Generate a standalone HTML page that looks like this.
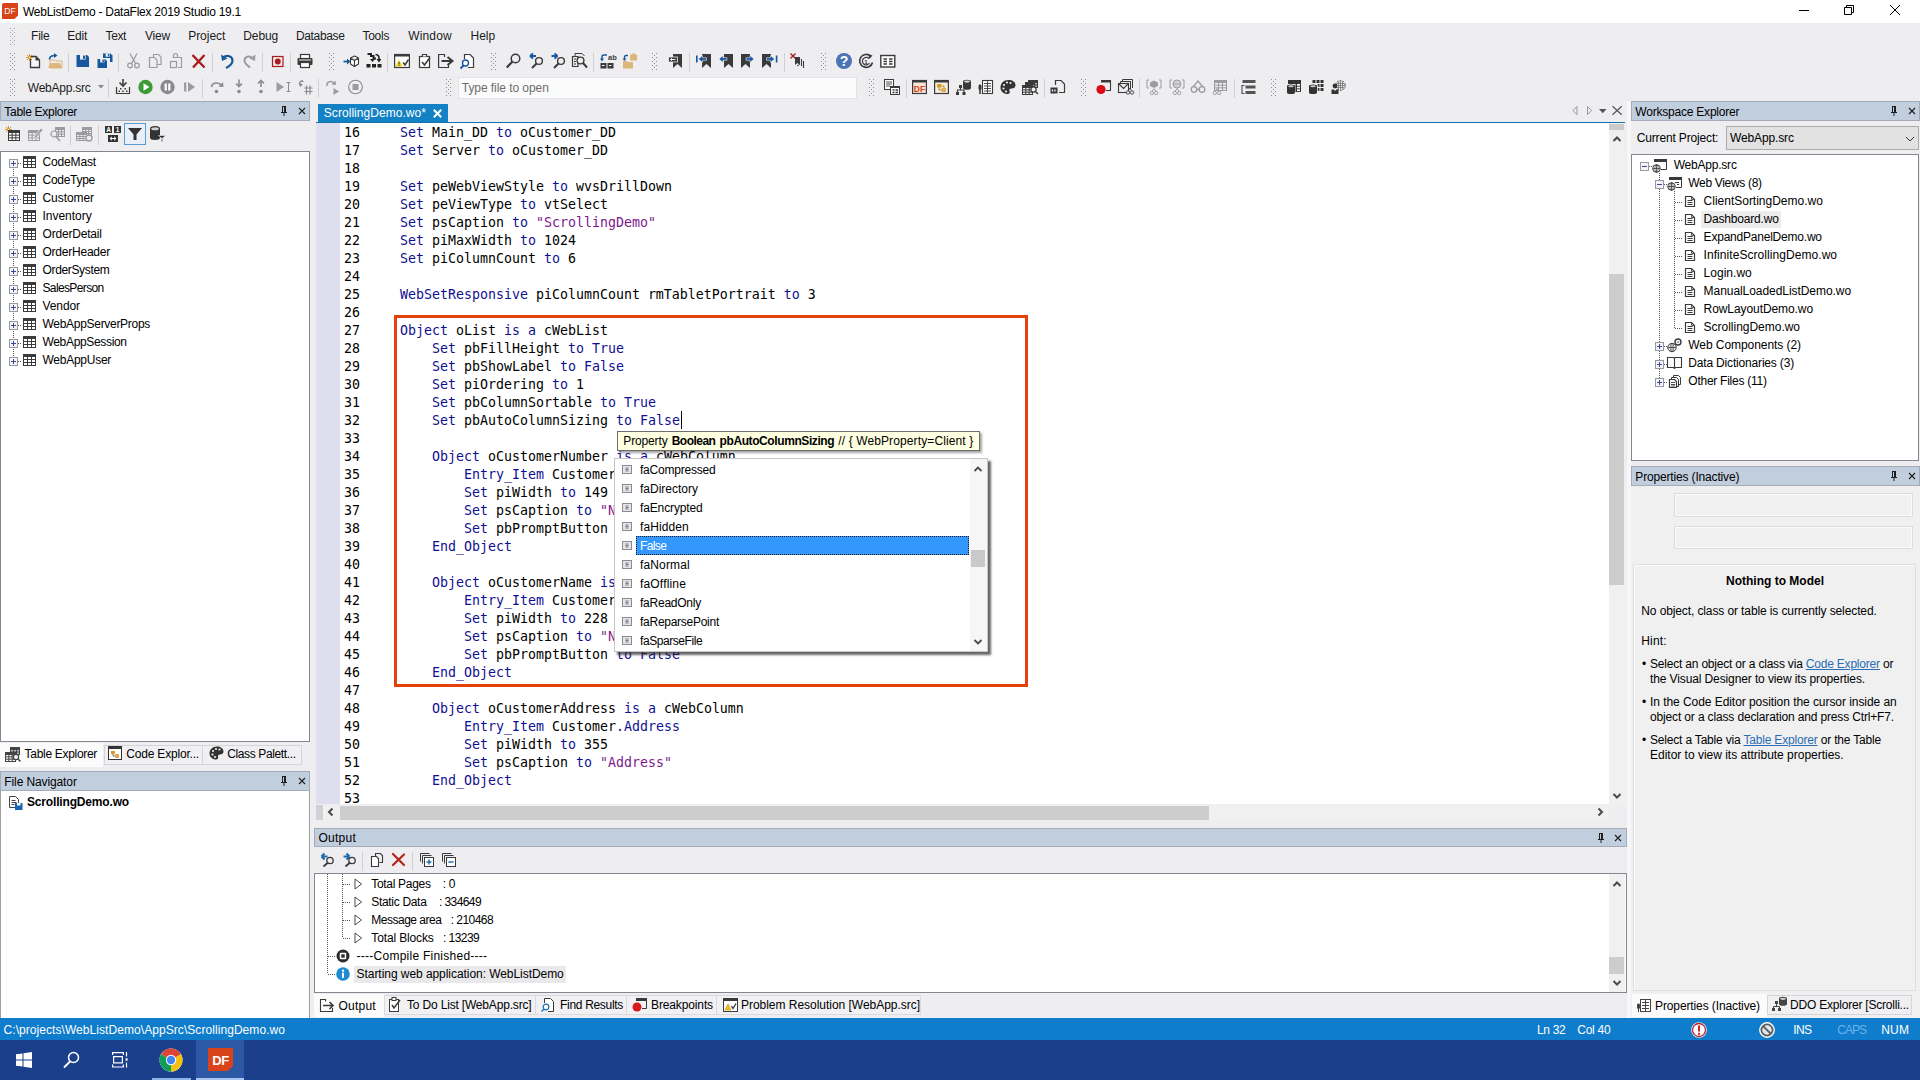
<!DOCTYPE html>
<html><head><meta charset="utf-8"><title>WebListDemo - DataFlex 2019 Studio 19.1</title>
<style>
html,body{margin:0;padding:0}
body{width:1920px;height:1080px;overflow:hidden;position:relative;background:#eeeef1;font-family:"Liberation Sans",sans-serif;font-size:12px;color:#000}
.a{position:absolute}
.t{white-space:pre}
.m{font-family:"DejaVu Sans Mono","Liberation Mono",monospace}
.k{color:#101092}
.s{color:#7d1a8c}
svg{position:absolute;overflow:visible}
</style></head><body>

<div class="a" style="left:0px;top:0px;width:1920px;height:23px;background:#fff;"></div>
<div class="a t" style="left:23px;top:3.5px;height:16px;line-height:16px;letter-spacing:-0.254px;">WebListDemo - DataFlex 2019 Studio 19.1</div>
<svg style="left:2px;top:2.7px;" width="16" height="16" viewBox="0 0 16 16"><path d="M2 0H16V12.500L12.500 16H0V2Q0 0 2 0Z" fill="#d8431a"/><text x="8" y="11" font-size="8.500" fill="#fff" text-anchor="middle" font-family="Liberation Sans,sans-serif">DF</text></svg>
<svg style="left:1798px;top:0px;" width="110" height="23" viewBox="0 0 110 23"><path d="M1 10.5H11" stroke="#000" stroke-width="1" fill="none"/><path d="M46.5 7.500H53.500V14.500H46.500Z M48.500 7.500V5.500H55.500V12.500H53.500" stroke="#000" stroke-width="1" fill="none"/><path d="M92 5L102 15M102 5L92 15" stroke="#000" stroke-width="1" fill="none"/></svg>
<div class="a t" style="left:31.1px;top:28px;height:16px;line-height:16px;color:#1b1b1b;letter-spacing:-0.284px;">File</div>
<div class="a t" style="left:67.2px;top:28px;height:16px;line-height:16px;color:#1b1b1b;letter-spacing:-0.17px;">Edit</div>
<div class="a t" style="left:105.6px;top:28px;height:16px;line-height:16px;color:#1b1b1b;letter-spacing:-0.402px;">Text</div>
<div class="a t" style="left:144.9px;top:28px;height:16px;line-height:16px;color:#1b1b1b;letter-spacing:-0.174px;">View</div>
<div class="a t" style="left:188.2px;top:28px;height:16px;line-height:16px;color:#1b1b1b;letter-spacing:-0.036px;">Project</div>
<div class="a t" style="left:243.2px;top:28px;height:16px;line-height:16px;color:#1b1b1b;letter-spacing:-0.072px;">Debug</div>
<div class="a t" style="left:296px;top:28px;height:16px;line-height:16px;color:#1b1b1b;letter-spacing:-0.359px;">Database</div>
<div class="a t" style="left:362.4px;top:28px;height:16px;line-height:16px;color:#1b1b1b;letter-spacing:-0.243px;">Tools</div>
<div class="a t" style="left:408.2px;top:28px;height:16px;line-height:16px;color:#1b1b1b;letter-spacing:0.153px;">Window</div>
<div class="a t" style="left:470.5px;top:28px;height:16px;line-height:16px;color:#1b1b1b;letter-spacing:-0.02px;">Help</div>
<svg style="left:10px;top:28px;" width="5" height="17" viewBox="0 0 5 17"><g fill="#a4a4aa"><rect x="0" y="0" width="1" height="1"/><rect x="4" y="0" width="1" height="1"/><rect x="2" y="2" width="1" height="1"/><rect x="0" y="4" width="1" height="1"/><rect x="4" y="4" width="1" height="1"/><rect x="2" y="6" width="1" height="1"/><rect x="0" y="8" width="1" height="1"/><rect x="4" y="8" width="1" height="1"/><rect x="2" y="10" width="1" height="1"/><rect x="0" y="12" width="1" height="1"/><rect x="4" y="12" width="1" height="1"/><rect x="2" y="14" width="1" height="1"/><rect x="0" y="16" width="1" height="1"/><rect x="4" y="16" width="1" height="1"/></g></svg>
<svg style="left:10px;top:53px;" width="5" height="17" viewBox="0 0 5 17"><g fill="#8e8e94"><rect x="0" y="0" width="1" height="1"/><rect x="4" y="0" width="1" height="1"/><rect x="2" y="2" width="1" height="1"/><rect x="0" y="4" width="1" height="1"/><rect x="4" y="4" width="1" height="1"/><rect x="2" y="6" width="1" height="1"/><rect x="0" y="8" width="1" height="1"/><rect x="4" y="8" width="1" height="1"/><rect x="2" y="10" width="1" height="1"/><rect x="0" y="12" width="1" height="1"/><rect x="4" y="12" width="1" height="1"/><rect x="2" y="14" width="1" height="1"/><rect x="0" y="16" width="1" height="1"/><rect x="4" y="16" width="1" height="1"/></g></svg>
<svg style="left:25px;top:53px;" width="16" height="16" viewBox="0 0 16 16"><path d="M5.500 3.500H11L14.500 7V14.500H5.500Z" fill="#f6f6fa" stroke="#3a3a3a" stroke-width="1.300"/><path d="M10.500 3.500L14.500 7.500H10.500Z" fill="#3a3a3a"/><g transform="translate(1,1)" stroke="#d08a1a" stroke-width="0.9" fill="none"><path d="M3.500 0V7M0 3.500H7M1 1L6 6M6 1L1 6"/><circle cx="3.500" cy="3.500" r="1.200" fill="#ffe9a8" stroke="#d08a1a" stroke-width="0.800"/></g></svg>
<svg style="left:47px;top:53px;" width="16" height="16" viewBox="0 0 16 16"><path d="M3 7H8L9 8H15V15H3Z" fill="none" stroke="#dcb67a" stroke-width="1"/><path d="M1 15L3.500 10H13L15 15Z" fill="#dcb67a"/><path d="M2.500 6.500C2.500 3.500 5 2.500 8 2.500" fill="none" stroke="#17579b" stroke-width="1.700"/><path d="M7 0L10.500 2.500L7 5Z" fill="#17579b"/></svg>
<div class="a" style="left:68px;top:52.5px;width:1px;height:19px;background:#d0d0d6;"></div>
<svg style="left:76px;top:53px;" width="16" height="16" viewBox="0 0 16 16"><path d="M0.5 2H11.0L13.0 4V14H0.5Z" fill="#17579b"/><rect x="4.0" y="2" width="5.625" height="4.5600000000000005" fill="#eeeef1"/><rect x="7.0" y="2.6" width="1.875" height="3.3600000000000003" fill="#17579b"/></svg>
<svg style="left:97px;top:53px;" width="16" height="16" viewBox="0 0 16 16"><path d="M6 0.5H13.5L15.5 2.5V9.0H6Z" fill="#17579b"/><rect x="8.66" y="0.5" width="4.275" height="3.23" fill="#eeeef1"/><rect x="10.940000000000001" y="1.1" width="1.425" height="2.3800000000000003" fill="#17579b"/><rect x="4" y="5" width="9" height="5.500" fill="#eeeef1"/><path d="M0.5 6H8.0L10.0 8V15H0.5Z" fill="#17579b"/><rect x="3.16" y="6" width="4.275" height="3.42" fill="#eeeef1"/><rect x="5.44" y="6.6" width="1.425" height="2.5200000000000005" fill="#17579b"/></svg>
<div class="a" style="left:118px;top:52.5px;width:1px;height:19px;background:#d0d0d6;"></div>
<svg style="left:126px;top:53px;" width="16" height="16" viewBox="0 0 16 16"><path d="M4 0.500L9.500 10.500M11 0.500L5.500 10.500" stroke="#9b9ba1" stroke-width="1.300" fill="none"/><circle cx="4" cy="12.500" r="2.300" fill="none" stroke="#9b9ba1" stroke-width="1.300"/><circle cx="11" cy="12.500" r="2.300" fill="none" stroke="#9b9ba1" stroke-width="1.300"/></svg>
<svg style="left:148px;top:53px;" width="16" height="16" viewBox="0 0 16 16"><path d="M5.500 4V1.500H10.500L13 4V11.500H9" fill="none" stroke="#9b9ba1" stroke-width="1.200"/><path d="M1.500 4.500H6.500L9 7V14.500H1.500Z" fill="#eeeef1" stroke="#9b9ba1" stroke-width="1.200"/></svg>
<svg style="left:169px;top:53px;" width="16" height="16" viewBox="0 0 16 16"><path d="M4.500 4V2.500A2 2 0 0 1 8.500 2.500V4M3.500 4.500H12.500V14.500H9" fill="none" stroke="#9b9ba1" stroke-width="1.200"/><rect x="1.500" y="8.500" width="6" height="6" fill="#eeeef1" stroke="#9b9ba1" stroke-width="1.200"/></svg>
<svg style="left:191px;top:53px;" width="16" height="16" viewBox="0 0 16 16"><path d="M1.500 2L13.500 14.500M13.500 2L2 14.500" stroke="#a61d1d" stroke-width="2.400" fill="none"/></svg>
<div class="a" style="left:212px;top:52.5px;width:1px;height:19px;background:#d0d0d6;"></div>
<svg style="left:220px;top:53px;" width="16" height="16" viewBox="0 0 16 16"><path d="M3 4.500C7 1.500 12.500 3 12.500 7.500C12.500 11 9 13.500 6 15" fill="none" stroke="#17579b" stroke-width="2.200"/><path d="M1 1.500L2 8L7.500 5.500Z" fill="#17579b"/></svg>
<svg style="left:242px;top:53px;" width="16" height="16" viewBox="0 0 16 16"><path d="M10.500 5C7.500 2.500 2.500 3.500 2.500 7.500C2.500 10.500 5.500 12.500 8 14.500" fill="none" stroke="#9b9ba1" stroke-width="2"/><path d="M13.500 1.500L13 8L7.500 5.500Z" fill="#9b9ba1"/></svg>
<div class="a" style="left:262px;top:52.5px;width:1px;height:19px;background:#d0d0d6;"></div>
<svg style="left:271px;top:53px;" width="16" height="16" viewBox="0 0 16 16"><rect x="1.500" y="3.500" width="10.500" height="10" fill="#f5e6e6" stroke="#a61d1d" stroke-width="1.200"/><circle cx="6.800" cy="8.500" r="2.900" fill="#a61d1d"/></svg>
<div class="a" style="left:290px;top:52.5px;width:1px;height:19px;background:#d0d0d6;"></div>
<svg style="left:297px;top:53px;" width="16" height="16" viewBox="0 0 16 16"><rect x="3.500" y="1.500" width="9" height="4" fill="#fff" stroke="#3a3a3a" stroke-width="1.200"/><rect x="0.500" y="5" width="15" height="7" rx="1" fill="#3a3a3a"/><rect x="3.500" y="9.500" width="9" height="5" fill="#fff" stroke="#3a3a3a" stroke-width="1.200"/><rect x="2" y="6.500" width="12" height="1" fill="#eee"/></svg>
<svg style="left:329px;top:53px;" width="5" height="17" viewBox="0 0 5 17"><g fill="#8e8e94"><rect x="0" y="0" width="1" height="1"/><rect x="4" y="0" width="1" height="1"/><rect x="2" y="2" width="1" height="1"/><rect x="0" y="4" width="1" height="1"/><rect x="4" y="4" width="1" height="1"/><rect x="2" y="6" width="1" height="1"/><rect x="0" y="8" width="1" height="1"/><rect x="4" y="8" width="1" height="1"/><rect x="2" y="10" width="1" height="1"/><rect x="0" y="12" width="1" height="1"/><rect x="4" y="12" width="1" height="1"/><rect x="2" y="14" width="1" height="1"/><rect x="0" y="16" width="1" height="1"/><rect x="4" y="16" width="1" height="1"/></g></svg>
<svg style="left:343px;top:53px;" width="16" height="16" viewBox="0 0 16 16"><path d="M0.500 8.500H6" stroke="#17579b" stroke-width="1.800"/><path d="M4 5.500L7.500 8.500L4 11.500Z" fill="#17579b"/><path d="M11.500 3L15.500 5V11L11.500 13.500L7.500 11V5ZM7.500 5L11.500 7.500L15.500 5M11.500 7.500V13.500" fill="#fff" stroke="#3a3a3a" stroke-width="1.100" stroke-linejoin="round"/></svg>
<svg style="left:366px;top:53px;" width="16" height="16" viewBox="0 0 16 16"><path d="M1.500 1H5V3H7.500V5.500H10" fill="none" stroke="#222" stroke-width="2"/><path d="M9.500 1.500C12 1.500 13.500 3 13 6.500" fill="none" stroke="#222" stroke-width="1.600"/><path d="M10.500 6L13 9.500L15.500 6Z" fill="#222"/><path d="M4 6L6.500 9L9 6Z" fill="#222"/><rect x="0.500" y="11" width="4" height="3.500" fill="#222"/><rect x="6" y="11" width="4" height="3.500" fill="#222"/><rect x="11.500" y="11" width="4" height="3.500" fill="#222"/></svg>
<div class="a" style="left:387px;top:52.5px;width:1px;height:19px;background:#d0d0d6;"></div>
<svg style="left:394px;top:53px;" width="16" height="16" viewBox="0 0 16 16"><rect x="0.600" y="1.500" width="14.800" height="13" fill="#fff" stroke="#3a3a3a" stroke-width="1.200"/><rect x="0" y="1" width="16" height="2.500" fill="#3a3a3a"/><path d="M1.500 13.500L5 6.500L8.500 13.500Z" fill="#f2d21a"/><rect x="4.600" y="9" width="0.900" height="2.500" fill="#333"/><rect x="4.600" y="12" width="0.900" height="0.900" fill="#333"/><path d="M9 9.500L11 12L14.500 6.500" fill="none" stroke="#3a3a3a" stroke-width="1.500"/></svg>
<svg style="left:418px;top:53px;" width="16" height="16" viewBox="0 0 16 16"><rect x="1.500" y="3.500" width="10" height="11" fill="#fff" stroke="#3a3a3a" stroke-width="1.200"/><path d="M4.500 3.500V1.500H8.500V3.500" fill="#fff" stroke="#3a3a3a" stroke-width="1.200"/><path d="M4 9L6.500 12L12 4.500" fill="none" stroke="#3a3a3a" stroke-width="1.600"/></svg>
<svg style="left:438px;top:53px;" width="16" height="16" viewBox="0 0 16 16"><path d="M6.500 4V1.500H0.600V14.500H10.500V12" fill="none" stroke="#3a3a3a" stroke-width="1.200"/><path d="M3.500 8H13" stroke="#3a3a3a" stroke-width="2"/><path d="M9.500 4L14.500 8L9.500 12" fill="none" stroke="#3a3a3a" stroke-width="2"/></svg>
<svg style="left:460px;top:53px;" width="16" height="16" viewBox="0 0 16 16"><path d="M4.500 6V1.500H10L13.500 5V14.500H8" fill="#fff" stroke="#3a3a3a" stroke-width="1.200"/><circle cx="5.500" cy="10" r="3" fill="#fff" stroke="#17579b" stroke-width="1.400"/><path d="M3.500 12.500L0.500 15.500" stroke="#17579b" stroke-width="1.800"/></svg>
<svg style="left:491px;top:53px;" width="5" height="17" viewBox="0 0 5 17"><g fill="#8e8e94"><rect x="0" y="0" width="1" height="1"/><rect x="4" y="0" width="1" height="1"/><rect x="2" y="2" width="1" height="1"/><rect x="0" y="4" width="1" height="1"/><rect x="4" y="4" width="1" height="1"/><rect x="2" y="6" width="1" height="1"/><rect x="0" y="8" width="1" height="1"/><rect x="4" y="8" width="1" height="1"/><rect x="2" y="10" width="1" height="1"/><rect x="0" y="12" width="1" height="1"/><rect x="4" y="12" width="1" height="1"/><rect x="2" y="14" width="1" height="1"/><rect x="0" y="16" width="1" height="1"/><rect x="4" y="16" width="1" height="1"/></g></svg>
<svg style="left:506px;top:53px;" width="16" height="16" viewBox="0 0 16 16"><circle cx="9.500" cy="5.500" r="4.300" fill="none" stroke="#3a3a3a" stroke-width="1.500"/><path d="M6.500 8.500L0.800 14.500" stroke="#3a3a3a" stroke-width="2.200"/></svg>
<svg style="left:529px;top:53px;" width="16" height="16" viewBox="0 0 16 16"><path d="M1 3H7M1 3L4 0.300M1 3L4 5.700" stroke="#17579b" stroke-width="1.800" fill="none"/><circle cx="10" cy="8" r="3.400" fill="none" stroke="#3a3a3a" stroke-width="1.400"/><path d="M7.500 10.500L3 15" stroke="#3a3a3a" stroke-width="2"/></svg>
<svg style="left:551px;top:53px;" width="16" height="16" viewBox="0 0 16 16"><path d="M0.500 3H6.500M6.500 3L3.500 0.300M6.500 3L3.500 5.700" stroke="#17579b" stroke-width="1.800" fill="none"/><circle cx="10" cy="8" r="3.400" fill="none" stroke="#3a3a3a" stroke-width="1.400"/><path d="M7.500 10.500L3 15" stroke="#3a3a3a" stroke-width="2"/></svg>
<svg style="left:572px;top:53px;" width="16" height="16" viewBox="0 0 16 16"><path d="M3 3V0.500H10L12.500 3" fill="none" stroke="#3a3a3a" stroke-width="1"/><path d="M0.500 3.500H6V13.500H0.500Z" fill="none" stroke="#3a3a3a" stroke-width="1.200"/><path d="M2 6H4M2 8.500H4M2 11H4" stroke="#3a3a3a" stroke-width="1"/><circle cx="8.500" cy="7.500" r="3.400" fill="#eeeef1" stroke="#3a3a3a" stroke-width="1.400"/><path d="M11 10L15 14.500" stroke="#3a3a3a" stroke-width="2"/></svg>
<div class="a" style="left:593px;top:52.5px;width:1px;height:19px;background:#d0d0d6;"></div>
<svg style="left:600px;top:53px;" width="16" height="16" viewBox="0 0 16 16"><path d="M2 7V3.500Q2 2 4 2H7" fill="none" stroke="#17579b" stroke-width="1.400"/><path d="M0 5.500L2 8.500L4 5.500Z" fill="#17579b"/><text x="8" y="6.500" font-size="7.500" font-weight="bold" fill="#3a3a3a" font-family="Liberation Sans,sans-serif">ab</text><rect x="0.500" y="10" width="6" height="5.500" fill="#3a3a3a"/><rect x="7.500" y="10" width="6" height="5.500" fill="#3a3a3a"/><path d="M2 12.500H4.500M9 12.500H11.500" stroke="#fff" stroke-width="1"/></svg>
<svg style="left:622px;top:53px;" width="16" height="16" viewBox="0 0 16 16"><rect x="8" y="1.500" width="7" height="6" fill="#dcb67a"/><rect x="10" y="0.500" width="3" height="1.500" fill="#dcb67a"/><path d="M1 8H5L6 9H11V15.500H1Z" fill="#dcb67a"/><path d="M2.500 7V4Q2.500 2.500 4 2.500H6" fill="none" stroke="#17579b" stroke-width="1.300"/><path d="M0.500 5.500L2.500 8L4.500 5.500Z" fill="#17579b"/></svg>
<svg style="left:652px;top:53px;" width="5" height="17" viewBox="0 0 5 17"><g fill="#8e8e94"><rect x="0" y="0" width="1" height="1"/><rect x="4" y="0" width="1" height="1"/><rect x="2" y="2" width="1" height="1"/><rect x="0" y="4" width="1" height="1"/><rect x="4" y="4" width="1" height="1"/><rect x="2" y="6" width="1" height="1"/><rect x="0" y="8" width="1" height="1"/><rect x="4" y="8" width="1" height="1"/><rect x="2" y="10" width="1" height="1"/><rect x="0" y="12" width="1" height="1"/><rect x="4" y="12" width="1" height="1"/><rect x="2" y="14" width="1" height="1"/><rect x="0" y="16" width="1" height="1"/><rect x="4" y="16" width="1" height="1"/></g></svg>
<svg style="left:668px;top:53px;" width="16" height="16" viewBox="0 0 16 16"><path d="M5 1H14V15L9.5 11L5 15Z" fill="#3a3a3a"/><rect x="0.500" y="4" width="9" height="5" fill="#3a3a3a" stroke="#eeeef1" stroke-width="0.800"/><path d="M2.500 6.500H7.500M2.500 6.500L4 5.200M2.500 6.500L4 7.800" stroke="#fff" stroke-width="0.900" fill="none"/></svg>
<div class="a" style="left:689px;top:52.5px;width:1px;height:19px;background:#d0d0d6;"></div>
<svg style="left:696px;top:53px;" width="16" height="16" viewBox="0 0 16 16"><path d="M6 1H15V15L10.5 11L6 15Z" fill="#3a3a3a"/><path d="M2.5 6L6.5 2.5V4.7H10.5V7.3H6.5V9.5Z" fill="#17579b" stroke="#eeeef1" stroke-width="0.600"/><rect x="0" y="2.500" width="1.600" height="7" fill="#17579b"/></svg>
<svg style="left:719px;top:53px;" width="16" height="16" viewBox="0 0 16 16"><path d="M5 1H14V15L9.5 11L5 15Z" fill="#3a3a3a"/><path d="M0 6L4 2.5V4.7H8V7.3H4V9.5Z" fill="#17579b" stroke="#eeeef1" stroke-width="0.600"/></svg>
<svg style="left:741px;top:53px;" width="16" height="16" viewBox="0 0 16 16"><path d="M0 1H9V15L4.5 11L0 15Z" fill="#3a3a3a"/><path d="M13 6L9 2.5V4.7H5V7.3H9V9.5Z" fill="#17579b" stroke="#eeeef1" stroke-width="0.600"/></svg>
<svg style="left:762px;top:53px;" width="16" height="16" viewBox="0 0 16 16"><path d="M0 1H9V15L4.5 11L0 15Z" fill="#3a3a3a"/><path d="M12.5 6L8.5 2.5V4.7H4.5V7.3H8.5V9.5Z" fill="#17579b" stroke="#eeeef1" stroke-width="0.600"/><rect x="13.800" y="2.500" width="1.600" height="7" fill="#17579b"/></svg>
<div class="a" style="left:783.5px;top:52.5px;width:1px;height:19px;background:#d0d0d6;"></div>
<svg style="left:790px;top:53px;" width="16" height="16" viewBox="0 0 16 16"><path d="M0.500 0.500L5.500 5.500M5.500 0.500L0.500 5.500" stroke="#a61d1d" stroke-width="1.400"/><path d="M5 4H10V12L7.500 10L5 12Z" fill="#3a3a3a"/><path d="M11.500 6V13M13.500 8V15" stroke="#3a3a3a" stroke-width="1.100"/><path d="M7 13L9.500 11.500" stroke="#3a3a3a" stroke-width="1"/></svg>
<svg style="left:821px;top:53px;" width="5" height="17" viewBox="0 0 5 17"><g fill="#8e8e94"><rect x="0" y="0" width="1" height="1"/><rect x="4" y="0" width="1" height="1"/><rect x="2" y="2" width="1" height="1"/><rect x="0" y="4" width="1" height="1"/><rect x="4" y="4" width="1" height="1"/><rect x="2" y="6" width="1" height="1"/><rect x="0" y="8" width="1" height="1"/><rect x="4" y="8" width="1" height="1"/><rect x="2" y="10" width="1" height="1"/><rect x="0" y="12" width="1" height="1"/><rect x="4" y="12" width="1" height="1"/><rect x="2" y="14" width="1" height="1"/><rect x="0" y="16" width="1" height="1"/><rect x="4" y="16" width="1" height="1"/></g></svg>
<svg style="left:836px;top:53px;" width="16" height="16" viewBox="0 0 16 16"><circle cx="8" cy="8" r="8" fill="#4a74b5"/><text x="8" y="13" font-size="14" font-weight="bold" fill="#fff" text-anchor="middle" font-family="Liberation Sans,sans-serif">?</text></svg>
<svg style="left:858px;top:53px;" width="16" height="16" viewBox="0 0 16 16"><path d="M12.500 3A6.500 6.500 0 1 0 14.500 9.500" fill="none" stroke="#3a3a3a" stroke-width="1.600"/><path d="M11 5.500A3.800 3.800 0 1 0 11.500 10" fill="none" stroke="#3a3a3a" stroke-width="1.200"/><path d="M10 1L14.500 2.500L11.500 6Z" fill="#3a3a3a"/><text x="8" y="10.500" font-size="6" font-weight="bold" fill="#3a3a3a" text-anchor="middle" font-family="Liberation Sans,sans-serif">1</text></svg>
<svg style="left:880px;top:53px;" width="16" height="16" viewBox="0 0 16 16"><rect x="0.800" y="2.500" width="14" height="11.500" fill="#fff" stroke="#3a3a3a" stroke-width="1.400"/><path d="M3.500 6H7M9 6H12.500M3.500 8.500H7M9 8.500H12.500M3.500 11H7M9 11H12.500" stroke="#3a3a3a" stroke-width="1.500"/></svg>
<svg style="left:10px;top:79px;" width="5" height="17" viewBox="0 0 5 17"><g fill="#8e8e94"><rect x="0" y="0" width="1" height="1"/><rect x="4" y="0" width="1" height="1"/><rect x="2" y="2" width="1" height="1"/><rect x="0" y="4" width="1" height="1"/><rect x="4" y="4" width="1" height="1"/><rect x="2" y="6" width="1" height="1"/><rect x="0" y="8" width="1" height="1"/><rect x="4" y="8" width="1" height="1"/><rect x="2" y="10" width="1" height="1"/><rect x="0" y="12" width="1" height="1"/><rect x="4" y="12" width="1" height="1"/><rect x="2" y="14" width="1" height="1"/><rect x="0" y="16" width="1" height="1"/><rect x="4" y="16" width="1" height="1"/></g></svg>
<div class="a t" style="left:27.8px;top:80px;height:16px;line-height:16px;color:#1b1b1b;letter-spacing:-0.234px;">WebApp.src</div>
<svg style="left:98px;top:84.5px;" width="6" height="4" viewBox="0 0 6 4"><path d="M0 0H6L3 3.500Z" fill="#8a8a8e"/></svg>
<div class="a" style="left:108px;top:78.5px;width:1px;height:19px;background:#d0d0d6;"></div>
<svg style="left:115px;top:78.8px;" width="16" height="16" viewBox="0 0 16 16"><path d="M1.500 8V14.500H14.500V8" fill="none" stroke="#3a3a3a" stroke-width="1.200"/><path d="M8 0V6" stroke="#3a3a3a" stroke-width="1.600"/><path d="M4.500 3.500L8 7L11.500 3.500" fill="none" stroke="#3a3a3a" stroke-width="1.600"/><rect x="5" y="9" width="1.500" height="1.500" fill="#3a3a3a"/><rect x="9.500" y="9" width="1.500" height="1.500" fill="#3a3a3a"/><rect x="3.500" y="11.500" width="1.500" height="1.500" fill="#3a3a3a"/><rect x="7.200" y="11.500" width="1.500" height="1.500" fill="#3a3a3a"/><rect x="11" y="11.500" width="1.500" height="1.500" fill="#3a3a3a"/></svg>
<svg style="left:137.5px;top:78.8px;" width="16" height="16" viewBox="0 0 16 16"><circle cx="7.500" cy="8" r="7.200" fill="#3d9b35"/><path d="M5.500 4.200L11.500 8L5.500 11.800Z" fill="#fff"/></svg>
<svg style="left:159.5px;top:78.8px;" width="16" height="16" viewBox="0 0 16 16"><circle cx="7.500" cy="8" r="7.200" fill="#8a8a8e"/><rect x="4.600" y="4.500" width="2.200" height="7" fill="#fff"/><rect x="8.200" y="4.500" width="2.200" height="7" fill="#fff"/></svg>
<svg style="left:182px;top:78.8px;" width="16" height="16" viewBox="0 0 16 16"><rect x="2" y="3.500" width="2.300" height="9" fill="#9b9ba1"/><path d="M6 3L13 8L6 13Z" fill="#9b9ba1"/></svg>
<div class="a" style="left:202px;top:78.5px;width:1px;height:19px;background:#d0d0d6;"></div>
<svg style="left:210px;top:78.8px;" width="16" height="16" viewBox="0 0 16 16"><path d="M1.500 8C2 3.500 9 2.500 11.500 6.500" fill="none" stroke="#8a8a8e" stroke-width="1.600"/><path d="M8.500 7.500L13.500 8L13 3Z" fill="#8a8a8e"/><circle cx="6.500" cy="12.500" r="1.800" fill="#8a8a8e"/></svg>
<svg style="left:231px;top:78.8px;" width="16" height="16" viewBox="0 0 16 16"><path d="M8 0.500V7" stroke="#8a8a8e" stroke-width="1.600"/><path d="M5 4.500L8 7.500L11 4.500" fill="none" stroke="#8a8a8e" stroke-width="1.600"/><circle cx="8" cy="12.500" r="1.800" fill="#8a8a8e"/></svg>
<svg style="left:253px;top:78.8px;" width="16" height="16" viewBox="0 0 16 16"><path d="M8 8V1.500" stroke="#8a8a8e" stroke-width="1.600"/><path d="M5 4.500L8 1.500L11 4.500" fill="none" stroke="#8a8a8e" stroke-width="1.600"/><circle cx="8" cy="12.500" r="1.800" fill="#8a8a8e"/></svg>
<svg style="left:276px;top:78.8px;" width="16" height="16" viewBox="0 0 16 16"><path d="M0.500 3L8 8L0.500 13Z" fill="#9b9ba1"/><path d="M10.500 3.500H14.500M12.500 3.500V12.500M10.500 12.500H14.500" stroke="#8a8a8e" stroke-width="1" fill="none"/></svg>
<svg style="left:298px;top:78.8px;" width="16" height="16" viewBox="0 0 16 16"><path d="M2 6C0.500 3.500 3 1 5.500 2.500" fill="none" stroke="#8a8a8e" stroke-width="1.400"/><path d="M0.500 4.500L2.500 8L5 5Z" fill="#8a8a8e"/><path d="M8.500 6.500V15.500M12 6.500V15.500M6.500 9H14.500M6.500 12.500H14.500" stroke="#8a8a8e" stroke-width="1.200"/></svg>
<div class="a" style="left:318px;top:78.5px;width:1px;height:19px;background:#d0d0d6;"></div>
<svg style="left:325px;top:78.8px;" width="16" height="16" viewBox="0 0 16 16"><path d="M2 7C1 3 6 1 9 4" fill="none" stroke="#9b9ba1" stroke-width="1.500"/><path d="M6.500 5.500L11 6L10.500 1.500Z" fill="#9b9ba1"/><path d="M8.500 9L14 12.500L8.500 16Z" fill="#9b9ba1"/></svg>
<svg style="left:347.5px;top:78.8px;" width="16" height="16" viewBox="0 0 16 16"><circle cx="7.500" cy="8" r="6.800" fill="none" stroke="#8a8a8e" stroke-width="1.100"/><rect x="4.500" y="5" width="6" height="6" fill="#9b9ba1"/></svg>
<svg style="left:446px;top:79px;" width="5" height="17" viewBox="0 0 5 17"><g fill="#8e8e94"><rect x="0" y="0" width="1" height="1"/><rect x="4" y="0" width="1" height="1"/><rect x="2" y="2" width="1" height="1"/><rect x="0" y="4" width="1" height="1"/><rect x="4" y="4" width="1" height="1"/><rect x="2" y="6" width="1" height="1"/><rect x="0" y="8" width="1" height="1"/><rect x="4" y="8" width="1" height="1"/><rect x="2" y="10" width="1" height="1"/><rect x="0" y="12" width="1" height="1"/><rect x="4" y="12" width="1" height="1"/><rect x="2" y="14" width="1" height="1"/><rect x="0" y="16" width="1" height="1"/><rect x="4" y="16" width="1" height="1"/></g></svg>
<div class="a" style="left:457.5px;top:76.5px;width:399px;height:22px;background:#fbfbfc;border:1px solid #e3e3e8;box-sizing:border-box;"></div>
<div class="a t" style="left:461.8px;top:80px;height:16px;line-height:16px;color:#6d6d6d;letter-spacing:-0.062px;">Type file to open</div>
<svg style="left:869px;top:79px;" width="5" height="17" viewBox="0 0 5 17"><g fill="#8e8e94"><rect x="0" y="0" width="1" height="1"/><rect x="4" y="0" width="1" height="1"/><rect x="2" y="2" width="1" height="1"/><rect x="0" y="4" width="1" height="1"/><rect x="4" y="4" width="1" height="1"/><rect x="2" y="6" width="1" height="1"/><rect x="0" y="8" width="1" height="1"/><rect x="4" y="8" width="1" height="1"/><rect x="2" y="10" width="1" height="1"/><rect x="0" y="12" width="1" height="1"/><rect x="4" y="12" width="1" height="1"/><rect x="2" y="14" width="1" height="1"/><rect x="0" y="16" width="1" height="1"/><rect x="4" y="16" width="1" height="1"/></g></svg>
<svg style="left:884px;top:78.8px;" width="16" height="16" viewBox="0 0 16 16"><rect x="0.500" y="0.500" width="9" height="10" fill="#fff" stroke="#3a3a3a" stroke-width="1"/><path d="M2 3H8M2 5H8M2 7H6" stroke="#3a3a3a" stroke-width="0.900"/><rect x="6.500" y="7.500" width="9" height="8" fill="#fff" stroke="#3a3a3a" stroke-width="1"/><rect x="6" y="7" width="10" height="2" fill="#3a3a3a"/><path d="M8.500 11H10.500M11.500 11H14M8.500 13.500H10.500M11.500 13.500H14" stroke="#3a3a3a" stroke-width="1.300"/></svg>
<div class="a" style="left:906px;top:78.5px;width:1px;height:19px;background:#d0d0d6;"></div>
<svg style="left:912px;top:78.8px;" width="16" height="16" viewBox="0 0 16 16"><rect x="0.600" y="1.500" width="13.800" height="13" fill="#fbe3d8" stroke="#3a3a3a" stroke-width="1.200"/><rect x="0" y="1" width="15" height="2.500" fill="#3a3a3a"/><text x="7.500" y="12.500" font-size="8.500" font-weight="bold" fill="#d8431a" text-anchor="middle" font-family="Liberation Sans,sans-serif">DF</text></svg>
<svg style="left:934px;top:78.8px;" width="16" height="16" viewBox="0 0 16 16"><rect x="0.600" y="1.500" width="13.800" height="13" fill="#f6eee0" stroke="#3a3a3a" stroke-width="1.200"/><rect x="0" y="1" width="15" height="2.500" fill="#3a3a3a"/><rect x="3" y="5" width="4.500" height="3.500" fill="#d69a2d"/><rect x="7.500" y="9" width="4.500" height="4" fill="#e0ad55"/><path d="M5 8.500V11H7.500M10 9V7H8" stroke="#a87a22" fill="none" stroke-width="0.900"/></svg>
<svg style="left:956px;top:78.8px;" width="16" height="16" viewBox="0 0 16 16"><path d="M7 2.500A4 1.800 0 0 1 15 2.500V9A4 1.800 0 0 1 7 9Z" fill="#3a3a3a"/><ellipse cx="11" cy="2.600" rx="3" ry="1.100" fill="#d6d6d6"/><path d="M4.500 8V11M1.500 13.500V11H8V13.500" fill="none" stroke="#3a3a3a" stroke-width="1.100"/><rect x="3" y="6" width="3" height="3" fill="#3a3a3a"/><rect x="0" y="13" width="3" height="3" fill="#3a3a3a"/><rect x="6.500" y="13" width="3" height="3" fill="#3a3a3a"/></svg>
<svg style="left:978px;top:78.8px;" width="16" height="16" viewBox="0 0 16 16"><rect x="4.500" y="1.500" width="10" height="13" fill="#fff" stroke="#3a3a3a" stroke-width="1.100"/><path d="M6 4.500H13M6 7H13M6 9.500H13M6 12H13M9.500 2V14" stroke="#3a3a3a" stroke-width="0.900"/><path d="M0.500 7C0.500 5 3.500 5 3.500 7V10L2.800 11V15H1.200V11L0.500 10Z" fill="#3a3a3a"/></svg>
<svg style="left:1000px;top:78.8px;" width="16" height="16" viewBox="0 0 16 16"><path d="M8.500 1C3.500 1 0.500 4.500 0.500 8.500C0.500 12.500 3.500 15 7.500 15C9.500 15 10.500 13.500 9.500 12C8.800 10.500 9.800 9.500 11.500 9.500C14 9.500 15.500 8.500 15.500 6C15.500 3 12.500 1 8.500 1Z" fill="#333"/><circle cx="4" cy="6" r="1.100" fill="#eee"/><circle cx="7" cy="3.500" r="1.100" fill="#eee"/><circle cx="10.500" cy="4" r="1.100" fill="#eee"/><circle cx="3.500" cy="9.500" r="1.100" fill="#eee"/><circle cx="6" cy="12.500" r="1.100" fill="#eee"/></svg>
<svg style="left:1022px;top:78.8px;" width="16" height="16" viewBox="0 0 16 16"><g transform="translate(6,1)"><rect x="0" y="0" width="10" height="8" fill="#3a3a3a"/><rect x="1.0" y="3.0" width="2.0" height="0.67" fill="#eeeef1"/><rect x="1.0" y="4.67" width="2.0" height="0.67" fill="#eeeef1"/><rect x="1.0" y="6.33" width="2.0" height="0.67" fill="#eeeef1"/><rect x="4.0" y="3.0" width="2.0" height="0.67" fill="#eeeef1"/><rect x="4.0" y="4.67" width="2.0" height="0.67" fill="#eeeef1"/><rect x="4.0" y="6.33" width="2.0" height="0.67" fill="#eeeef1"/><rect x="7.0" y="3.0" width="2.0" height="0.67" fill="#eeeef1"/><rect x="7.0" y="4.67" width="2.0" height="0.67" fill="#eeeef1"/><rect x="7.0" y="6.33" width="2.0" height="0.67" fill="#eeeef1"/></g><g transform="translate(3,3)"><rect x="0" y="0" width="10" height="8" fill="#3a3a3a"/><rect x="1.0" y="3.0" width="2.0" height="0.67" fill="#eeeef1"/><rect x="1.0" y="4.67" width="2.0" height="0.67" fill="#eeeef1"/><rect x="1.0" y="6.33" width="2.0" height="0.67" fill="#eeeef1"/><rect x="4.0" y="3.0" width="2.0" height="0.67" fill="#eeeef1"/><rect x="4.0" y="4.67" width="2.0" height="0.67" fill="#eeeef1"/><rect x="4.0" y="6.33" width="2.0" height="0.67" fill="#eeeef1"/><rect x="7.0" y="3.0" width="2.0" height="0.67" fill="#eeeef1"/><rect x="7.0" y="4.67" width="2.0" height="0.67" fill="#eeeef1"/><rect x="7.0" y="6.33" width="2.0" height="0.67" fill="#eeeef1"/></g><g transform="translate(0,6)"><rect x="0" y="0" width="11" height="10" fill="#3a3a3a"/><rect x="1.0" y="3.0" width="2.33" height="1.33" fill="#eeeef1"/><rect x="1.0" y="5.33" width="2.33" height="1.33" fill="#eeeef1"/><rect x="1.0" y="7.67" width="2.33" height="1.33" fill="#eeeef1"/><rect x="4.33" y="3.0" width="2.33" height="1.33" fill="#eeeef1"/><rect x="4.33" y="5.33" width="2.33" height="1.33" fill="#eeeef1"/><rect x="4.33" y="7.67" width="2.33" height="1.33" fill="#eeeef1"/><rect x="7.67" y="3.0" width="2.33" height="1.33" fill="#eeeef1"/><rect x="7.67" y="5.33" width="2.33" height="1.33" fill="#eeeef1"/><rect x="7.67" y="7.67" width="2.33" height="1.33" fill="#eeeef1"/></g><circle cx="11.500" cy="10.500" r="2.600" fill="#eeeef1" stroke="#3a3a3a" stroke-width="1.200"/><path d="M13.500 12.500L16 15" stroke="#3a3a3a" stroke-width="1.500"/></svg>
<div class="a" style="left:1044px;top:78.5px;width:1px;height:19px;background:#d0d0d6;"></div>
<svg style="left:1050px;top:78.8px;" width="16" height="16" viewBox="0 0 16 16"><path d="M5.500 6V1.500H11L14.500 5V13.500H9" fill="none" stroke="#3a3a3a" stroke-width="1.200"/><rect x="0.500" y="8.500" width="7" height="6" fill="#3a3a3a"/><path d="M2.500 10.500V12.500M5 10.500V12.500" stroke="#fff" stroke-width="1.200"/></svg>
<svg style="left:1081px;top:79px;" width="5" height="17" viewBox="0 0 5 17"><g fill="#8e8e94"><rect x="0" y="0" width="1" height="1"/><rect x="4" y="0" width="1" height="1"/><rect x="2" y="2" width="1" height="1"/><rect x="0" y="4" width="1" height="1"/><rect x="4" y="4" width="1" height="1"/><rect x="2" y="6" width="1" height="1"/><rect x="0" y="8" width="1" height="1"/><rect x="4" y="8" width="1" height="1"/><rect x="2" y="10" width="1" height="1"/><rect x="0" y="12" width="1" height="1"/><rect x="4" y="12" width="1" height="1"/><rect x="2" y="14" width="1" height="1"/><rect x="0" y="16" width="1" height="1"/><rect x="4" y="16" width="1" height="1"/></g></svg>
<svg style="left:1096px;top:78.8px;" width="16" height="16" viewBox="0 0 16 16"><path d="M5.500 1.500H14.500V11.500H10" fill="none" stroke="#3a3a3a" stroke-width="1.100"/><rect x="5" y="1" width="10" height="2.500" fill="#3a3a3a"/><circle cx="5" cy="10.500" r="4.600" fill="#d90b14"/></svg>
<svg style="left:1118px;top:78.8px;" width="16" height="16" viewBox="0 0 16 16"><path d="M4.500 3V0.500H14.500V9" fill="none" stroke="#3a3a3a" stroke-width="1"/><path d="M2.500 5V2.500H12.500V10" fill="none" stroke="#3a3a3a" stroke-width="1"/><rect x="0.500" y="4.500" width="10" height="9" fill="#eeeef1" stroke="#3a3a3a" stroke-width="1.100"/><path d="M0.500 4.500L5.500 9.500L10.500 4.500" fill="none" stroke="#3a3a3a" stroke-width="1.100"/><circle cx="10" cy="13.500" r="1.700" fill="#eeeef1" stroke="#3a3a3a" stroke-width="0.900"/><circle cx="14" cy="13.500" r="1.700" fill="#eeeef1" stroke="#3a3a3a" stroke-width="0.900"/><path d="M10.500 11.500L12 9L13.500 11.500" fill="none" stroke="#3a3a3a" stroke-width="0.900"/></svg>
<div class="a" style="left:1139px;top:78.5px;width:1px;height:19px;background:#d0d0d6;"></div>
<svg style="left:1146px;top:78.8px;" width="16" height="16" viewBox="0 0 16 16"><path d="M3 1H1V9H3M13 1H15V9H13" fill="none" stroke="#9b9ba1" stroke-width="1"/><path d="M4 3.500L8 1.500L12 3.500V7L8 9L4 7Z" fill="#9b9ba1"/><circle cx="5.8" cy="14" r="1.700" fill="none" stroke="#9b9ba1" stroke-width="0.900"/><circle cx="10.2" cy="14" r="1.700" fill="none" stroke="#9b9ba1" stroke-width="0.900"/><path d="M6 12.4L8 9.5L10 12.4" fill="none" stroke="#9b9ba1" stroke-width="0.900"/></svg>
<svg style="left:1169px;top:78.8px;" width="16" height="16" viewBox="0 0 16 16"><path d="M3 1H1V9H3M13 1H15V9H13" fill="none" stroke="#9b9ba1" stroke-width="1"/><circle cx="8" cy="5" r="4" fill="none" stroke="#9b9ba1" stroke-width="1"/><path d="M4 5H12M8 1V9M6 1.500V8.500M10 1.500V8.500" stroke="#9b9ba1" stroke-width="0.700"/><circle cx="5.8" cy="14" r="1.700" fill="none" stroke="#9b9ba1" stroke-width="0.900"/><circle cx="10.2" cy="14" r="1.700" fill="none" stroke="#9b9ba1" stroke-width="0.900"/><path d="M6 12.4L8 9.5L10 12.4" fill="none" stroke="#9b9ba1" stroke-width="0.900"/></svg>
<svg style="left:1190px;top:78.8px;" width="16" height="16" viewBox="0 0 16 16"><circle cx="4" cy="10.500" r="2.800" fill="none" stroke="#9b9ba1" stroke-width="1.300"/><circle cx="12" cy="10.500" r="2.800" fill="none" stroke="#9b9ba1" stroke-width="1.300"/><path d="M3 8L8 2L13 8M6.800 10.500H9.200" fill="none" stroke="#9b9ba1" stroke-width="1.300"/></svg>
<svg style="left:1212px;top:78.8px;" width="16" height="16" viewBox="0 0 16 16"><g transform="translate(2,1)"><rect x="0" y="0" width="13" height="11" fill="#9b9ba1"/><rect x="1.0" y="3.0" width="3.0" height="1.67" fill="#eeeef1"/><rect x="1.0" y="5.67" width="3.0" height="1.67" fill="#eeeef1"/><rect x="1.0" y="8.33" width="3.0" height="1.67" fill="#eeeef1"/><rect x="5.0" y="3.0" width="3.0" height="1.67" fill="#eeeef1"/><rect x="5.0" y="5.67" width="3.0" height="1.67" fill="#eeeef1"/><rect x="5.0" y="8.33" width="3.0" height="1.67" fill="#eeeef1"/><rect x="9.0" y="3.0" width="3.0" height="1.67" fill="#eeeef1"/><rect x="9.0" y="5.67" width="3.0" height="1.67" fill="#eeeef1"/><rect x="9.0" y="8.33" width="3.0" height="1.67" fill="#eeeef1"/></g><circle cx="2.8" cy="14" r="1.700" fill="none" stroke="#9b9ba1" stroke-width="0.900"/><circle cx="7.2" cy="14" r="1.700" fill="none" stroke="#9b9ba1" stroke-width="0.900"/><path d="M3 12.4L5 9.5L7 12.4" fill="none" stroke="#9b9ba1" stroke-width="0.900"/></svg>
<div class="a" style="left:1233.5px;top:78.5px;width:1px;height:19px;background:#d0d0d6;"></div>
<svg style="left:1241px;top:78.8px;" width="16" height="16" viewBox="0 0 16 16"><rect x="1.500" y="1" width="13" height="3" fill="#555"/><rect x="4.500" y="6.500" width="10" height="3" fill="#555"/><rect x="4.500" y="12" width="10" height="3" fill="#555"/><path d="M3.500 6.500H1V14.500H3.500" fill="none" stroke="#555" stroke-width="1.200"/></svg>
<svg style="left:1271px;top:79px;" width="5" height="17" viewBox="0 0 5 17"><g fill="#8e8e94"><rect x="0" y="0" width="1" height="1"/><rect x="4" y="0" width="1" height="1"/><rect x="2" y="2" width="1" height="1"/><rect x="0" y="4" width="1" height="1"/><rect x="4" y="4" width="1" height="1"/><rect x="2" y="6" width="1" height="1"/><rect x="0" y="8" width="1" height="1"/><rect x="4" y="8" width="1" height="1"/><rect x="2" y="10" width="1" height="1"/><rect x="0" y="12" width="1" height="1"/><rect x="4" y="12" width="1" height="1"/><rect x="2" y="14" width="1" height="1"/><rect x="0" y="16" width="1" height="1"/><rect x="4" y="16" width="1" height="1"/></g></svg>
<svg style="left:1286px;top:78.8px;" width="16" height="16" viewBox="0 0 16 16"><rect x="2" y="1" width="13" height="12" fill="#333"/><rect x="2" y="1" width="13" height="3" fill="#333"/><rect x="11" y="5.0" width="3" height="1.700" fill="#fff"/><rect x="11" y="7.7" width="3" height="1.700" fill="#fff"/><rect x="11" y="10.4" width="3" height="1.700" fill="#fff"/><rect x="0" y="5" width="9.500" height="11" fill="#eeeef1"/><path d="M1 7.02A4.0 1.52 0 0 1 9 7.02V13.48A4.0 1.52 0 0 1 1 13.48Z" fill="#333"/><ellipse cx="5.0" cy="7.319999999999999" rx="2.8" ry="0.9880000000000001" fill="#c9c9c9"/></svg>
<svg style="left:1308px;top:78.8px;" width="16" height="16" viewBox="0 0 16 16"><rect x="4.5" y="1" width="3" height="3" fill="#333"/><rect x="4.5" y="5" width="3" height="3" fill="#333"/><rect x="4.5" y="9" width="3" height="3" fill="#333"/><rect x="8.5" y="1" width="3" height="3" fill="#333"/><rect x="8.5" y="5" width="3" height="3" fill="#333"/><rect x="8.5" y="9" width="3" height="3" fill="#333"/><rect x="12.5" y="1" width="3" height="3" fill="#333"/><rect x="12.5" y="5" width="3" height="3" fill="#333"/><rect x="12.5" y="9" width="3" height="3" fill="#333"/><rect x="0" y="5" width="10.300" height="11" fill="#eeeef1"/><rect x="9.700" y="5" width="0.900" height="2.500" fill="#333"/><rect x="9.700" y="9" width="0.900" height="2.500" fill="#333"/><path d="M1 7.02A4.0 1.52 0 0 1 9 7.02V13.48A4.0 1.52 0 0 1 1 13.48Z" fill="#333"/><ellipse cx="5.0" cy="7.319999999999999" rx="2.8" ry="0.9880000000000001" fill="#c9c9c9"/></svg>
<svg style="left:1330px;top:78.8px;" width="16" height="16" viewBox="0 0 16 16"><circle cx="10.500" cy="6.500" r="4.800" fill="#eeeef1" stroke="#444" stroke-width="0.900" stroke-dasharray="2 1"/><path d="M6 6.500H15M10.500 2V11M8.500 2.500V10.500M12.500 2.500V10.500M6.500 4.500H14.500M6.500 8.500H14.500" stroke="#555" stroke-width="0.600"/><circle cx="5" cy="7" r="2.400" fill="#333"/><path d="M1.500 10.500H3.700L5 12L6.300 10.500H8.500V15H1.500Z" fill="#333"/></svg>
<div class="a" style="left:0px;top:101px;width:310px;height:20px;background:#c1cedd;border:1px solid #a3abb8;box-sizing:border-box;"></div>
<div class="a t" style="left:4.3px;top:103.6px;height:16px;line-height:16px;letter-spacing:-0.286px;">Table Explorer</div>
<svg style="left:281px;top:106px;" width="6" height="10" viewBox="0 0 6 10"><path d="M1.5 0.5H4.5M1.5 0V6M4.5 0V6M3.5 0V6M0 6.5H6M3 7V10" stroke="#1e1e1e" stroke-width="1" fill="none"/></svg>
<svg style="left:298.5px;top:108px;" width="6" height="6" viewBox="0 0 6 6"><path d="M0 0L6 6M6 0L0 6" stroke="#1e1e1e" stroke-width="1.1" fill="none"/></svg>
<svg style="left:5px;top:126px;" width="16" height="16" viewBox="0 0 16 16"><g transform="translate(0,0)" stroke="#d08a1a" stroke-width="0.9" fill="none"><path d="M3.500 0V7M0 3.500H7M1 1L6 6M6 1L1 6"/><circle cx="3.500" cy="3.500" r="1.200" fill="#ffe9a8" stroke="#d08a1a" stroke-width="0.800"/></g><g transform="translate(3,4)"><rect x="0" y="0" width="12" height="11" fill="#3a3a3a"/><rect x="1.0" y="3.0" width="2.67" height="1.67" fill="#fff"/><rect x="1.0" y="5.67" width="2.67" height="1.67" fill="#fff"/><rect x="1.0" y="8.33" width="2.67" height="1.67" fill="#fff"/><rect x="4.67" y="3.0" width="2.67" height="1.67" fill="#fff"/><rect x="4.67" y="5.67" width="2.67" height="1.67" fill="#fff"/><rect x="4.67" y="8.33" width="2.67" height="1.67" fill="#fff"/><rect x="8.33" y="3.0" width="2.67" height="1.67" fill="#fff"/><rect x="8.33" y="5.67" width="2.67" height="1.67" fill="#fff"/><rect x="8.33" y="8.33" width="2.67" height="1.67" fill="#fff"/></g></svg>
<svg style="left:28px;top:126px;" width="16" height="16" viewBox="0 0 16 16"><g transform="translate(0,4)"><rect x="0" y="0" width="12" height="11" fill="#9b9ba1"/><rect x="1.0" y="3.0" width="2.67" height="1.67" fill="#eeeef1"/><rect x="1.0" y="5.67" width="2.67" height="1.67" fill="#eeeef1"/><rect x="1.0" y="8.33" width="2.67" height="1.67" fill="#eeeef1"/><rect x="4.67" y="3.0" width="2.67" height="1.67" fill="#eeeef1"/><rect x="4.67" y="5.67" width="2.67" height="1.67" fill="#eeeef1"/><rect x="4.67" y="8.33" width="2.67" height="1.67" fill="#eeeef1"/><rect x="8.33" y="3.0" width="2.67" height="1.67" fill="#eeeef1"/><rect x="8.33" y="5.67" width="2.67" height="1.67" fill="#eeeef1"/><rect x="8.33" y="8.33" width="2.67" height="1.67" fill="#eeeef1"/></g><path d="M6 11L13 2L15 4L8 12L5.500 12.5Z" fill="#9b9ba1" stroke="#eeeef1" stroke-width="0.8"/></svg>
<svg style="left:50px;top:126px;" width="16" height="16" viewBox="0 0 16 16"><g transform="translate(5,1)"><rect x="0" y="0" width="10" height="10" fill="#9b9ba1"/><rect x="1.0" y="3.0" width="2.0" height="1.33" fill="#eeeef1"/><rect x="1.0" y="5.33" width="2.0" height="1.33" fill="#eeeef1"/><rect x="1.0" y="7.67" width="2.0" height="1.33" fill="#eeeef1"/><rect x="4.0" y="3.0" width="2.0" height="1.33" fill="#eeeef1"/><rect x="4.0" y="5.33" width="2.0" height="1.33" fill="#eeeef1"/><rect x="4.0" y="7.67" width="2.0" height="1.33" fill="#eeeef1"/><rect x="7.0" y="3.0" width="2.0" height="1.33" fill="#eeeef1"/><rect x="7.0" y="5.33" width="2.0" height="1.33" fill="#eeeef1"/><rect x="7.0" y="7.67" width="2.0" height="1.33" fill="#eeeef1"/></g><circle cx="4" cy="8" r="3" fill="#eeeef1" stroke="#9b9ba1" stroke-width="1.2"/><path d="M6 10.500L10 15" stroke="#9b9ba1" stroke-width="1.6"/></svg>
<div class="a" style="left:70px;top:125px;width:1px;height:20px;background:#cfcfd6;"></div>
<svg style="left:76px;top:126px;" width="17" height="16" viewBox="0 0 17 16"><g transform="translate(6,1)"><rect x="0" y="0" width="10" height="9" fill="#9b9ba1"/><rect x="1.0" y="3.0" width="2.0" height="1.0" fill="#eeeef1"/><rect x="1.0" y="5.0" width="2.0" height="1.0" fill="#eeeef1"/><rect x="1.0" y="7.0" width="2.0" height="1.0" fill="#eeeef1"/><rect x="4.0" y="3.0" width="2.0" height="1.0" fill="#eeeef1"/><rect x="4.0" y="5.0" width="2.0" height="1.0" fill="#eeeef1"/><rect x="4.0" y="7.0" width="2.0" height="1.0" fill="#eeeef1"/><rect x="7.0" y="3.0" width="2.0" height="1.0" fill="#eeeef1"/><rect x="7.0" y="5.0" width="2.0" height="1.0" fill="#eeeef1"/><rect x="7.0" y="7.0" width="2.0" height="1.0" fill="#eeeef1"/></g><g transform="translate(0,6)"><rect x="0" y="0" width="11" height="9" fill="#9b9ba1"/><rect x="1.0" y="3.0" width="2.33" height="1.0" fill="#eeeef1"/><rect x="1.0" y="5.0" width="2.33" height="1.0" fill="#eeeef1"/><rect x="1.0" y="7.0" width="2.33" height="1.0" fill="#eeeef1"/><rect x="4.33" y="3.0" width="2.33" height="1.0" fill="#eeeef1"/><rect x="4.33" y="5.0" width="2.33" height="1.0" fill="#eeeef1"/><rect x="4.33" y="7.0" width="2.33" height="1.0" fill="#eeeef1"/><rect x="7.67" y="3.0" width="2.33" height="1.0" fill="#eeeef1"/><rect x="7.67" y="5.0" width="2.33" height="1.0" fill="#eeeef1"/><rect x="7.67" y="7.0" width="2.33" height="1.0" fill="#eeeef1"/></g><circle cx="13" cy="12" r="3" fill="#eeeef1" stroke="#9b9ba1" stroke-width="1.3"/></svg>
<div class="a" style="left:98px;top:125px;width:1px;height:20px;background:#cfcfd6;"></div>
<svg style="left:105px;top:126px;" width="16" height="16" viewBox="0 0 16 16"><rect x="0" y="0" width="7" height="7" fill="#333"/><rect x="9" y="0" width="7" height="7" fill="#333"/><rect x="3" y="9" width="10" height="7" fill="#333"/><text x="3.5" y="6" font-size="6.5" font-weight="bold" fill="#fff" text-anchor="middle" font-family="Liberation Sans,sans-serif">A</text><text x="12.5" y="6" font-size="6.5" font-weight="bold" fill="#fff" text-anchor="middle" font-family="Liberation Sans,sans-serif">1</text><path d="M5 12.5H11M5 12.5L7 10.800M5 12.5L7 14.2M11 12.5L9 10.800M11 12.5L9 14.2" stroke="#fff" stroke-width="1" fill="none"/></svg>
<div class="a" style="left:124px;top:123px;width:22px;height:22px;background:#e9eff7;border:1px solid #5b9bd5;box-sizing:border-box;"></div>
<svg style="left:128px;top:127px;" width="14" height="14" viewBox="0 0 14 14"><path d="M0 1H14L8.500 7.5V13H5.500V7.5Z" fill="#333"/></svg>
<svg style="left:150px;top:126px;" width="16" height="16" viewBox="0 0 16 16"><path d="M0 2.500A5 2.500 0 0 1 10 2.500V11.500A5 2.500 0 0 1 0 11.500Z" fill="#333"/><ellipse cx="5" cy="2.800" rx="3.800" ry="1.500" fill="#cfcfcf"/><path d="M8.500 9.500H15.500L12 13Z M11.300 12H12.700V15.500H11.300Z" fill="#333" stroke="#eeeef2" stroke-width="0.6"/></svg>
<div class="a" style="left:0px;top:151px;width:310px;height:591px;background:#fff;border:1px solid #828790;box-sizing:border-box;"></div>
<div class="a" style="left:13px;top:163px;width:1px;height:198px;background:repeating-linear-gradient(to bottom,#555 0,#555 1px,transparent 1px,transparent 2px);"></div>
<div class="a" style="left:18px;top:163px;width:4px;height:1px;background:repeating-linear-gradient(to right,#555 0,#555 1px,transparent 1px,transparent 2px);"></div>
<svg style="left:9px;top:159px;" width="9" height="9" viewBox="0 0 9 9"><rect x="0.5" y="0.5" width="8" height="8" fill="#f4f4fa" stroke="#9898a4"/><path d="M2 4.5H7M4.5 2V7" stroke="#3b4a8c" stroke-width="1"/></svg>
<svg style="left:23px;top:156px;" width="13" height="12" viewBox="0 0 13 12"><g transform="translate(0,0)"><rect x="0" y="0" width="13" height="12" fill="#3a3a3a"/><rect x="1.0" y="3.0" width="3.0" height="2.0" fill="#fff"/><rect x="1.0" y="6.0" width="3.0" height="2.0" fill="#fff"/><rect x="1.0" y="9.0" width="3.0" height="2.0" fill="#fff"/><rect x="5.0" y="3.0" width="3.0" height="2.0" fill="#fff"/><rect x="5.0" y="6.0" width="3.0" height="2.0" fill="#fff"/><rect x="5.0" y="9.0" width="3.0" height="2.0" fill="#fff"/><rect x="9.0" y="3.0" width="3.0" height="2.0" fill="#fff"/><rect x="9.0" y="6.0" width="3.0" height="2.0" fill="#fff"/><rect x="9.0" y="9.0" width="3.0" height="2.0" fill="#fff"/></g></svg>
<div class="a t" style="left:42.5px;top:153.7px;height:16px;line-height:16px;letter-spacing:-0.149px;">CodeMast</div>
<div class="a" style="left:18px;top:181px;width:4px;height:1px;background:repeating-linear-gradient(to right,#555 0,#555 1px,transparent 1px,transparent 2px);"></div>
<svg style="left:9px;top:177px;" width="9" height="9" viewBox="0 0 9 9"><rect x="0.5" y="0.5" width="8" height="8" fill="#f4f4fa" stroke="#9898a4"/><path d="M2 4.5H7M4.5 2V7" stroke="#3b4a8c" stroke-width="1"/></svg>
<svg style="left:23px;top:174px;" width="13" height="12" viewBox="0 0 13 12"><g transform="translate(0,0)"><rect x="0" y="0" width="13" height="12" fill="#3a3a3a"/><rect x="1.0" y="3.0" width="3.0" height="2.0" fill="#fff"/><rect x="1.0" y="6.0" width="3.0" height="2.0" fill="#fff"/><rect x="1.0" y="9.0" width="3.0" height="2.0" fill="#fff"/><rect x="5.0" y="3.0" width="3.0" height="2.0" fill="#fff"/><rect x="5.0" y="6.0" width="3.0" height="2.0" fill="#fff"/><rect x="5.0" y="9.0" width="3.0" height="2.0" fill="#fff"/><rect x="9.0" y="3.0" width="3.0" height="2.0" fill="#fff"/><rect x="9.0" y="6.0" width="3.0" height="2.0" fill="#fff"/><rect x="9.0" y="9.0" width="3.0" height="2.0" fill="#fff"/></g></svg>
<div class="a t" style="left:42.5px;top:171.7px;height:16px;line-height:16px;letter-spacing:-0.276px;">CodeType</div>
<div class="a" style="left:18px;top:199px;width:4px;height:1px;background:repeating-linear-gradient(to right,#555 0,#555 1px,transparent 1px,transparent 2px);"></div>
<svg style="left:9px;top:195px;" width="9" height="9" viewBox="0 0 9 9"><rect x="0.5" y="0.5" width="8" height="8" fill="#f4f4fa" stroke="#9898a4"/><path d="M2 4.5H7M4.5 2V7" stroke="#3b4a8c" stroke-width="1"/></svg>
<svg style="left:23px;top:192px;" width="13" height="12" viewBox="0 0 13 12"><g transform="translate(0,0)"><rect x="0" y="0" width="13" height="12" fill="#3a3a3a"/><rect x="1.0" y="3.0" width="3.0" height="2.0" fill="#fff"/><rect x="1.0" y="6.0" width="3.0" height="2.0" fill="#fff"/><rect x="1.0" y="9.0" width="3.0" height="2.0" fill="#fff"/><rect x="5.0" y="3.0" width="3.0" height="2.0" fill="#fff"/><rect x="5.0" y="6.0" width="3.0" height="2.0" fill="#fff"/><rect x="5.0" y="9.0" width="3.0" height="2.0" fill="#fff"/><rect x="9.0" y="3.0" width="3.0" height="2.0" fill="#fff"/><rect x="9.0" y="6.0" width="3.0" height="2.0" fill="#fff"/><rect x="9.0" y="9.0" width="3.0" height="2.0" fill="#fff"/></g></svg>
<div class="a t" style="left:42.5px;top:189.7px;height:16px;line-height:16px;letter-spacing:-0.064px;">Customer</div>
<div class="a" style="left:18px;top:217px;width:4px;height:1px;background:repeating-linear-gradient(to right,#555 0,#555 1px,transparent 1px,transparent 2px);"></div>
<svg style="left:9px;top:213px;" width="9" height="9" viewBox="0 0 9 9"><rect x="0.5" y="0.5" width="8" height="8" fill="#f4f4fa" stroke="#9898a4"/><path d="M2 4.5H7M4.5 2V7" stroke="#3b4a8c" stroke-width="1"/></svg>
<svg style="left:23px;top:210px;" width="13" height="12" viewBox="0 0 13 12"><g transform="translate(0,0)"><rect x="0" y="0" width="13" height="12" fill="#3a3a3a"/><rect x="1.0" y="3.0" width="3.0" height="2.0" fill="#fff"/><rect x="1.0" y="6.0" width="3.0" height="2.0" fill="#fff"/><rect x="1.0" y="9.0" width="3.0" height="2.0" fill="#fff"/><rect x="5.0" y="3.0" width="3.0" height="2.0" fill="#fff"/><rect x="5.0" y="6.0" width="3.0" height="2.0" fill="#fff"/><rect x="5.0" y="9.0" width="3.0" height="2.0" fill="#fff"/><rect x="9.0" y="3.0" width="3.0" height="2.0" fill="#fff"/><rect x="9.0" y="6.0" width="3.0" height="2.0" fill="#fff"/><rect x="9.0" y="9.0" width="3.0" height="2.0" fill="#fff"/></g></svg>
<div class="a t" style="left:42.5px;top:207.7px;height:16px;line-height:16px;letter-spacing:-0.018px;">Inventory</div>
<div class="a" style="left:18px;top:235px;width:4px;height:1px;background:repeating-linear-gradient(to right,#555 0,#555 1px,transparent 1px,transparent 2px);"></div>
<svg style="left:9px;top:231px;" width="9" height="9" viewBox="0 0 9 9"><rect x="0.5" y="0.5" width="8" height="8" fill="#f4f4fa" stroke="#9898a4"/><path d="M2 4.5H7M4.5 2V7" stroke="#3b4a8c" stroke-width="1"/></svg>
<svg style="left:23px;top:228px;" width="13" height="12" viewBox="0 0 13 12"><g transform="translate(0,0)"><rect x="0" y="0" width="13" height="12" fill="#3a3a3a"/><rect x="1.0" y="3.0" width="3.0" height="2.0" fill="#fff"/><rect x="1.0" y="6.0" width="3.0" height="2.0" fill="#fff"/><rect x="1.0" y="9.0" width="3.0" height="2.0" fill="#fff"/><rect x="5.0" y="3.0" width="3.0" height="2.0" fill="#fff"/><rect x="5.0" y="6.0" width="3.0" height="2.0" fill="#fff"/><rect x="5.0" y="9.0" width="3.0" height="2.0" fill="#fff"/><rect x="9.0" y="3.0" width="3.0" height="2.0" fill="#fff"/><rect x="9.0" y="6.0" width="3.0" height="2.0" fill="#fff"/><rect x="9.0" y="9.0" width="3.0" height="2.0" fill="#fff"/></g></svg>
<div class="a t" style="left:42.5px;top:225.7px;height:16px;line-height:16px;letter-spacing:-0.196px;">OrderDetail</div>
<div class="a" style="left:18px;top:253px;width:4px;height:1px;background:repeating-linear-gradient(to right,#555 0,#555 1px,transparent 1px,transparent 2px);"></div>
<svg style="left:9px;top:249px;" width="9" height="9" viewBox="0 0 9 9"><rect x="0.5" y="0.5" width="8" height="8" fill="#f4f4fa" stroke="#9898a4"/><path d="M2 4.5H7M4.5 2V7" stroke="#3b4a8c" stroke-width="1"/></svg>
<svg style="left:23px;top:246px;" width="13" height="12" viewBox="0 0 13 12"><g transform="translate(0,0)"><rect x="0" y="0" width="13" height="12" fill="#3a3a3a"/><rect x="1.0" y="3.0" width="3.0" height="2.0" fill="#fff"/><rect x="1.0" y="6.0" width="3.0" height="2.0" fill="#fff"/><rect x="1.0" y="9.0" width="3.0" height="2.0" fill="#fff"/><rect x="5.0" y="3.0" width="3.0" height="2.0" fill="#fff"/><rect x="5.0" y="6.0" width="3.0" height="2.0" fill="#fff"/><rect x="5.0" y="9.0" width="3.0" height="2.0" fill="#fff"/><rect x="9.0" y="3.0" width="3.0" height="2.0" fill="#fff"/><rect x="9.0" y="6.0" width="3.0" height="2.0" fill="#fff"/><rect x="9.0" y="9.0" width="3.0" height="2.0" fill="#fff"/></g></svg>
<div class="a t" style="left:42.5px;top:243.7px;height:16px;line-height:16px;letter-spacing:-0.23px;">OrderHeader</div>
<div class="a" style="left:18px;top:271px;width:4px;height:1px;background:repeating-linear-gradient(to right,#555 0,#555 1px,transparent 1px,transparent 2px);"></div>
<svg style="left:9px;top:267px;" width="9" height="9" viewBox="0 0 9 9"><rect x="0.5" y="0.5" width="8" height="8" fill="#f4f4fa" stroke="#9898a4"/><path d="M2 4.5H7M4.5 2V7" stroke="#3b4a8c" stroke-width="1"/></svg>
<svg style="left:23px;top:264px;" width="13" height="12" viewBox="0 0 13 12"><g transform="translate(0,0)"><rect x="0" y="0" width="13" height="12" fill="#3a3a3a"/><rect x="1.0" y="3.0" width="3.0" height="2.0" fill="#fff"/><rect x="1.0" y="6.0" width="3.0" height="2.0" fill="#fff"/><rect x="1.0" y="9.0" width="3.0" height="2.0" fill="#fff"/><rect x="5.0" y="3.0" width="3.0" height="2.0" fill="#fff"/><rect x="5.0" y="6.0" width="3.0" height="2.0" fill="#fff"/><rect x="5.0" y="9.0" width="3.0" height="2.0" fill="#fff"/><rect x="9.0" y="3.0" width="3.0" height="2.0" fill="#fff"/><rect x="9.0" y="6.0" width="3.0" height="2.0" fill="#fff"/><rect x="9.0" y="9.0" width="3.0" height="2.0" fill="#fff"/></g></svg>
<div class="a t" style="left:42.5px;top:261.7px;height:16px;line-height:16px;letter-spacing:-0.344px;">OrderSystem</div>
<div class="a" style="left:18px;top:289px;width:4px;height:1px;background:repeating-linear-gradient(to right,#555 0,#555 1px,transparent 1px,transparent 2px);"></div>
<svg style="left:9px;top:285px;" width="9" height="9" viewBox="0 0 9 9"><rect x="0.5" y="0.5" width="8" height="8" fill="#f4f4fa" stroke="#9898a4"/><path d="M2 4.5H7M4.5 2V7" stroke="#3b4a8c" stroke-width="1"/></svg>
<svg style="left:23px;top:282px;" width="13" height="12" viewBox="0 0 13 12"><g transform="translate(0,0)"><rect x="0" y="0" width="13" height="12" fill="#3a3a3a"/><rect x="1.0" y="3.0" width="3.0" height="2.0" fill="#fff"/><rect x="1.0" y="6.0" width="3.0" height="2.0" fill="#fff"/><rect x="1.0" y="9.0" width="3.0" height="2.0" fill="#fff"/><rect x="5.0" y="3.0" width="3.0" height="2.0" fill="#fff"/><rect x="5.0" y="6.0" width="3.0" height="2.0" fill="#fff"/><rect x="5.0" y="9.0" width="3.0" height="2.0" fill="#fff"/><rect x="9.0" y="3.0" width="3.0" height="2.0" fill="#fff"/><rect x="9.0" y="6.0" width="3.0" height="2.0" fill="#fff"/><rect x="9.0" y="9.0" width="3.0" height="2.0" fill="#fff"/></g></svg>
<div class="a t" style="left:42.5px;top:279.7px;height:16px;line-height:16px;letter-spacing:-0.631px;">SalesPerson</div>
<div class="a" style="left:18px;top:307px;width:4px;height:1px;background:repeating-linear-gradient(to right,#555 0,#555 1px,transparent 1px,transparent 2px);"></div>
<svg style="left:9px;top:303px;" width="9" height="9" viewBox="0 0 9 9"><rect x="0.5" y="0.5" width="8" height="8" fill="#f4f4fa" stroke="#9898a4"/><path d="M2 4.5H7M4.5 2V7" stroke="#3b4a8c" stroke-width="1"/></svg>
<svg style="left:23px;top:300px;" width="13" height="12" viewBox="0 0 13 12"><g transform="translate(0,0)"><rect x="0" y="0" width="13" height="12" fill="#3a3a3a"/><rect x="1.0" y="3.0" width="3.0" height="2.0" fill="#fff"/><rect x="1.0" y="6.0" width="3.0" height="2.0" fill="#fff"/><rect x="1.0" y="9.0" width="3.0" height="2.0" fill="#fff"/><rect x="5.0" y="3.0" width="3.0" height="2.0" fill="#fff"/><rect x="5.0" y="6.0" width="3.0" height="2.0" fill="#fff"/><rect x="5.0" y="9.0" width="3.0" height="2.0" fill="#fff"/><rect x="9.0" y="3.0" width="3.0" height="2.0" fill="#fff"/><rect x="9.0" y="6.0" width="3.0" height="2.0" fill="#fff"/><rect x="9.0" y="9.0" width="3.0" height="2.0" fill="#fff"/></g></svg>
<div class="a t" style="left:42.5px;top:297.7px;height:16px;line-height:16px;letter-spacing:-0.089px;">Vendor</div>
<div class="a" style="left:18px;top:325px;width:4px;height:1px;background:repeating-linear-gradient(to right,#555 0,#555 1px,transparent 1px,transparent 2px);"></div>
<svg style="left:9px;top:321px;" width="9" height="9" viewBox="0 0 9 9"><rect x="0.5" y="0.5" width="8" height="8" fill="#f4f4fa" stroke="#9898a4"/><path d="M2 4.5H7M4.5 2V7" stroke="#3b4a8c" stroke-width="1"/></svg>
<svg style="left:23px;top:318px;" width="13" height="12" viewBox="0 0 13 12"><g transform="translate(0,0)"><rect x="0" y="0" width="13" height="12" fill="#3a3a3a"/><rect x="1.0" y="3.0" width="3.0" height="2.0" fill="#fff"/><rect x="1.0" y="6.0" width="3.0" height="2.0" fill="#fff"/><rect x="1.0" y="9.0" width="3.0" height="2.0" fill="#fff"/><rect x="5.0" y="3.0" width="3.0" height="2.0" fill="#fff"/><rect x="5.0" y="6.0" width="3.0" height="2.0" fill="#fff"/><rect x="5.0" y="9.0" width="3.0" height="2.0" fill="#fff"/><rect x="9.0" y="3.0" width="3.0" height="2.0" fill="#fff"/><rect x="9.0" y="6.0" width="3.0" height="2.0" fill="#fff"/><rect x="9.0" y="9.0" width="3.0" height="2.0" fill="#fff"/></g></svg>
<div class="a t" style="left:42.5px;top:315.7px;height:16px;line-height:16px;letter-spacing:-0.294px;">WebAppServerProps</div>
<div class="a" style="left:18px;top:343px;width:4px;height:1px;background:repeating-linear-gradient(to right,#555 0,#555 1px,transparent 1px,transparent 2px);"></div>
<svg style="left:9px;top:339px;" width="9" height="9" viewBox="0 0 9 9"><rect x="0.5" y="0.5" width="8" height="8" fill="#f4f4fa" stroke="#9898a4"/><path d="M2 4.5H7M4.5 2V7" stroke="#3b4a8c" stroke-width="1"/></svg>
<svg style="left:23px;top:336px;" width="13" height="12" viewBox="0 0 13 12"><g transform="translate(0,0)"><rect x="0" y="0" width="13" height="12" fill="#3a3a3a"/><rect x="1.0" y="3.0" width="3.0" height="2.0" fill="#fff"/><rect x="1.0" y="6.0" width="3.0" height="2.0" fill="#fff"/><rect x="1.0" y="9.0" width="3.0" height="2.0" fill="#fff"/><rect x="5.0" y="3.0" width="3.0" height="2.0" fill="#fff"/><rect x="5.0" y="6.0" width="3.0" height="2.0" fill="#fff"/><rect x="5.0" y="9.0" width="3.0" height="2.0" fill="#fff"/><rect x="9.0" y="3.0" width="3.0" height="2.0" fill="#fff"/><rect x="9.0" y="6.0" width="3.0" height="2.0" fill="#fff"/><rect x="9.0" y="9.0" width="3.0" height="2.0" fill="#fff"/></g></svg>
<div class="a t" style="left:42.5px;top:333.7px;height:16px;line-height:16px;letter-spacing:-0.331px;">WebAppSession</div>
<div class="a" style="left:18px;top:361px;width:4px;height:1px;background:repeating-linear-gradient(to right,#555 0,#555 1px,transparent 1px,transparent 2px);"></div>
<svg style="left:9px;top:357px;" width="9" height="9" viewBox="0 0 9 9"><rect x="0.5" y="0.5" width="8" height="8" fill="#f4f4fa" stroke="#9898a4"/><path d="M2 4.5H7M4.5 2V7" stroke="#3b4a8c" stroke-width="1"/></svg>
<svg style="left:23px;top:354px;" width="13" height="12" viewBox="0 0 13 12"><g transform="translate(0,0)"><rect x="0" y="0" width="13" height="12" fill="#3a3a3a"/><rect x="1.0" y="3.0" width="3.0" height="2.0" fill="#fff"/><rect x="1.0" y="6.0" width="3.0" height="2.0" fill="#fff"/><rect x="1.0" y="9.0" width="3.0" height="2.0" fill="#fff"/><rect x="5.0" y="3.0" width="3.0" height="2.0" fill="#fff"/><rect x="5.0" y="6.0" width="3.0" height="2.0" fill="#fff"/><rect x="5.0" y="9.0" width="3.0" height="2.0" fill="#fff"/><rect x="9.0" y="3.0" width="3.0" height="2.0" fill="#fff"/><rect x="9.0" y="6.0" width="3.0" height="2.0" fill="#fff"/><rect x="9.0" y="9.0" width="3.0" height="2.0" fill="#fff"/></g></svg>
<div class="a t" style="left:42.5px;top:351.7px;height:16px;line-height:16px;letter-spacing:-0.255px;">WebAppUser</div>
<div class="a" style="left:0px;top:743px;width:103px;height:24px;background:#fbfbfc;"></div>
<div class="a" style="left:103.5px;top:745px;width:99px;height:20px;background:#f0f0f3;border:1px solid #d4d4da;box-sizing:border-box;"></div>
<div class="a" style="left:202px;top:745px;width:99.5px;height:20px;background:#f0f0f3;border:1px solid #d4d4da;box-sizing:border-box;"></div>
<div class="a t" style="left:24.6px;top:746.4px;height:16px;line-height:16px;letter-spacing:-0.308px;">Table Explorer</div>
<div class="a t" style="left:126.3px;top:745.5px;height:16px;line-height:16px;letter-spacing:-0.191px;">Code Explor...</div>
<div class="a t" style="left:227.2px;top:745.5px;height:16px;line-height:16px;letter-spacing:-0.375px;">Class Palett...</div>
<svg style="left:5px;top:747px;" width="16" height="15" viewBox="0 0 16 15"><g transform="translate(5,0)"><rect x="0" y="0" width="10" height="8" fill="#444"/><rect x="1.0" y="3.0" width="2.0" height="0.67" fill="#fbfbfc"/><rect x="1.0" y="4.67" width="2.0" height="0.67" fill="#fbfbfc"/><rect x="1.0" y="6.33" width="2.0" height="0.67" fill="#fbfbfc"/><rect x="4.0" y="3.0" width="2.0" height="0.67" fill="#fbfbfc"/><rect x="4.0" y="4.67" width="2.0" height="0.67" fill="#fbfbfc"/><rect x="4.0" y="6.33" width="2.0" height="0.67" fill="#fbfbfc"/><rect x="7.0" y="3.0" width="2.0" height="0.67" fill="#fbfbfc"/><rect x="7.0" y="4.67" width="2.0" height="0.67" fill="#fbfbfc"/><rect x="7.0" y="6.33" width="2.0" height="0.67" fill="#fbfbfc"/></g><g transform="translate(0,5)"><rect x="0" y="0" width="11" height="10" fill="#444"/><rect x="1.0" y="3.0" width="2.33" height="1.33" fill="#fbfbfc"/><rect x="1.0" y="5.33" width="2.33" height="1.33" fill="#fbfbfc"/><rect x="1.0" y="7.67" width="2.33" height="1.33" fill="#fbfbfc"/><rect x="4.33" y="3.0" width="2.33" height="1.33" fill="#fbfbfc"/><rect x="4.33" y="5.33" width="2.33" height="1.33" fill="#fbfbfc"/><rect x="4.33" y="7.67" width="2.33" height="1.33" fill="#fbfbfc"/><rect x="7.67" y="3.0" width="2.33" height="1.33" fill="#fbfbfc"/><rect x="7.67" y="5.33" width="2.33" height="1.33" fill="#fbfbfc"/><rect x="7.67" y="7.67" width="2.33" height="1.33" fill="#fbfbfc"/></g><circle cx="11" cy="10" r="2.600" fill="#f7f7f9" stroke="#444" stroke-width="1.2"/><path d="M13 12L15.500 14.500" stroke="#444" stroke-width="1.500"/></svg>
<svg style="left:108px;top:746px;" width="14" height="14" viewBox="0 0 14 14"><rect x="0.5" y="0.5" width="13" height="13" fill="#fff" stroke="#333"/><rect x="0" y="0" width="14" height="3" fill="#333"/><rect x="3" y="5" width="4" height="3" fill="#e0952a"/><rect x="7" y="8" width="4" height="4" fill="#e0a94a"/><path d="M5 8V10H7" stroke="#555" fill="none" stroke-width="0.8"/></svg>
<svg style="left:209px;top:746px;" width="15" height="14" viewBox="0 0 15 14"><path d="M8 0.5C3.500 0.500 0.500 3.500 0.500 7.500C0.500 11 3.500 13.500 7 13.500C9 13.500 9.500 12 9 11C8.500 9.500 9.500 8.500 11 8.500C13 8.500 14.500 7.500 14.500 5.500C14.500 2.500 11.500 0.500 8 0.500Z" fill="#333"/><circle cx="4" cy="5" r="1.100" fill="#eee"/><circle cx="7" cy="3" r="1.100" fill="#eee"/><circle cx="10.500" cy="3.500" r="1.100" fill="#eee"/><circle cx="3.500" cy="8.500" r="1.100" fill="#eee"/><circle cx="6" cy="11" r="1.100" fill="#eee"/></svg>
<div class="a" style="left:0px;top:771px;width:310px;height:20px;background:#c1cedd;border:1px solid #a3abb8;box-sizing:border-box;"></div>
<div class="a t" style="left:4.3px;top:773.6px;height:16px;line-height:16px;letter-spacing:-0.109px;">File Navigator</div>
<svg style="left:281px;top:776px;" width="6" height="10" viewBox="0 0 6 10"><path d="M1.5 0.5H4.5M1.5 0V6M4.5 0V6M3.5 0V6M0 6.5H6M3 7V10" stroke="#1e1e1e" stroke-width="1" fill="none"/></svg>
<svg style="left:298.5px;top:778px;" width="6" height="6" viewBox="0 0 6 6"><path d="M0 0L6 6M6 0L0 6" stroke="#1e1e1e" stroke-width="1.1" fill="none"/></svg>
<div class="a" style="left:0px;top:791px;width:310px;height:228px;background:#fff;border:1px solid #a0a0a0;box-sizing:border-box;border-top:none;border-bottom:none"></div>
<div class="a t" style="left:27px;top:794px;height:16px;line-height:16px;font-weight:bold;letter-spacing:-0.167px;">ScrollingDemo.wo</div>
<svg style="left:9px;top:796px;" width="14" height="14" viewBox="0 0 14 14"><path d="M0.5 0.5H6.500L9.500 3.500V11.500H0.500Z" fill="#fff" stroke="#444"/><path d="M2.500 4.500H6.500M2.500 6.500H7.500M2.500 8.500H5.500" stroke="#444" stroke-width="1"/><rect x="6" y="7" width="7.500" height="7" fill="#1765b3"/><rect x="8" y="7" width="3.500" height="2.500" fill="#fff"/></svg>
<div class="a" style="left:318px;top:104px;width:129.5px;height:18.5px;background:#1382c5;"></div>
<div class="a t" style="left:323.8px;top:105.2px;height:16px;line-height:16px;color:#fff;letter-spacing:0.048px;">ScrollingDemo.wo*</div>
<svg style="left:433px;top:109px;" width="9" height="9" viewBox="0 0 9 9"><path d="M0.8 0.800L8.200 8.200M8.200 0.800L0.800 8.200" stroke="#fff" stroke-width="2" fill="none"/></svg>
<div class="a" style="left:316px;top:122px;width:1308.7px;height:1.2px;background:#1a72ad;"></div>
<div class="a" style="left:316px;top:123px;width:1308.7px;height:681px;background:#fff;"></div>
<div class="a" style="left:316px;top:123px;width:24px;height:680.5px;background:#dedeee;"></div>
<svg style="left:1572px;top:106px;" width="50" height="11" viewBox="0 0 50 11"><path d="M5 0.500L0.800 4.500L5 8.500Z" fill="none" stroke="#8e8e94" stroke-width="0.900"/><path d="M15.500 0.500L19.700 4.500L15.500 8.500Z" fill="none" stroke="#8e8e94" stroke-width="0.900"/><path d="M27 3H34.500L30.750 7.200Z" fill="#555"/><path d="M40.500 0.300L49.700 8.700M49.700 0.300L40.500 8.700" stroke="#5a5a5a" stroke-width="1.300" fill="none"/></svg>
<div class="a m" style="left:316px;top:123.5px;width:1293px;height:680.5px;overflow:hidden;font-size:13.29px;letter-spacing:0px">
<div class="a t" style="left:28px;top:0.2px;line-height:18px;height:18px">16</div>
<div class="a t" style="left:84px;top:0.2px;line-height:18px;height:18px"><span class="k">Set</span> Main_DD <span class="k">to</span> oCustomer_DD</div>
<div class="a t" style="left:28px;top:18.2px;line-height:18px;height:18px">17</div>
<div class="a t" style="left:84px;top:18.2px;line-height:18px;height:18px"><span class="k">Set</span> Server <span class="k">to</span> oCustomer_DD</div>
<div class="a t" style="left:28px;top:36.2px;line-height:18px;height:18px">18</div>
<div class="a t" style="left:28px;top:54.2px;line-height:18px;height:18px">19</div>
<div class="a t" style="left:84px;top:54.2px;line-height:18px;height:18px"><span class="k">Set</span> peWebViewStyle <span class="k">to</span> wvsDrillDown</div>
<div class="a t" style="left:28px;top:72.2px;line-height:18px;height:18px">20</div>
<div class="a t" style="left:84px;top:72.2px;line-height:18px;height:18px"><span class="k">Set</span> peViewType <span class="k">to</span> vtSelect</div>
<div class="a t" style="left:28px;top:90.2px;line-height:18px;height:18px">21</div>
<div class="a t" style="left:84px;top:90.2px;line-height:18px;height:18px"><span class="k">Set</span> psCaption <span class="k">to</span> <span class="s">"ScrollingDemo"</span></div>
<div class="a t" style="left:28px;top:108.2px;line-height:18px;height:18px">22</div>
<div class="a t" style="left:84px;top:108.2px;line-height:18px;height:18px"><span class="k">Set</span> piMaxWidth <span class="k">to</span> 1024</div>
<div class="a t" style="left:28px;top:126.2px;line-height:18px;height:18px">23</div>
<div class="a t" style="left:84px;top:126.2px;line-height:18px;height:18px"><span class="k">Set</span> piColumnCount <span class="k">to</span> 6</div>
<div class="a t" style="left:28px;top:144.2px;line-height:18px;height:18px">24</div>
<div class="a t" style="left:28px;top:162.2px;line-height:18px;height:18px">25</div>
<div class="a t" style="left:84px;top:162.2px;line-height:18px;height:18px"><span class="k">WebSetResponsive</span> piColumnCount rmTabletPortrait <span class="k">to</span> 3</div>
<div class="a t" style="left:28px;top:180.2px;line-height:18px;height:18px">26</div>
<div class="a t" style="left:28px;top:198.2px;line-height:18px;height:18px">27</div>
<div class="a t" style="left:84px;top:198.2px;line-height:18px;height:18px"><span class="k">Object</span> oList <span class="k">is a</span> cWebList</div>
<div class="a t" style="left:28px;top:216.2px;line-height:18px;height:18px">28</div>
<div class="a t" style="left:116px;top:216.2px;line-height:18px;height:18px"><span class="k">Set</span> pbFillHeight <span class="k">to</span> <span class="k">True</span></div>
<div class="a t" style="left:28px;top:234.2px;line-height:18px;height:18px">29</div>
<div class="a t" style="left:116px;top:234.2px;line-height:18px;height:18px"><span class="k">Set</span> pbShowLabel <span class="k">to</span> <span class="k">False</span></div>
<div class="a t" style="left:28px;top:252.2px;line-height:18px;height:18px">30</div>
<div class="a t" style="left:116px;top:252.2px;line-height:18px;height:18px"><span class="k">Set</span> piOrdering <span class="k">to</span> 1</div>
<div class="a t" style="left:28px;top:270.2px;line-height:18px;height:18px">31</div>
<div class="a t" style="left:116px;top:270.2px;line-height:18px;height:18px"><span class="k">Set</span> pbColumnSortable <span class="k">to</span> <span class="k">True</span></div>
<div class="a t" style="left:28px;top:288.2px;line-height:18px;height:18px">32</div>
<div class="a t" style="left:116px;top:288.2px;line-height:18px;height:18px"><span class="k">Set</span> pbAutoColumnSizing <span class="k">to</span> <span class="k">False</span></div>
<div class="a t" style="left:28px;top:306.2px;line-height:18px;height:18px">33</div>
<div class="a t" style="left:28px;top:324.2px;line-height:18px;height:18px">34</div>
<div class="a t" style="left:116px;top:324.2px;line-height:18px;height:18px"><span class="k">Object</span> oCustomerNumber <span class="k">is a</span> cWebColumn</div>
<div class="a t" style="left:28px;top:342.2px;line-height:18px;height:18px">35</div>
<div class="a t" style="left:148px;top:342.2px;line-height:18px;height:18px"><span class="k">Entry_Item</span> Customer<span class="k">.Customer_Number</span></div>
<div class="a t" style="left:28px;top:360.2px;line-height:18px;height:18px">36</div>
<div class="a t" style="left:148px;top:360.2px;line-height:18px;height:18px"><span class="k">Set</span> piWidth <span class="k">to</span> 149</div>
<div class="a t" style="left:28px;top:378.2px;line-height:18px;height:18px">37</div>
<div class="a t" style="left:148px;top:378.2px;line-height:18px;height:18px"><span class="k">Set</span> psCaption <span class="k">to</span> <span class="s">"Number"</span></div>
<div class="a t" style="left:28px;top:396.2px;line-height:18px;height:18px">38</div>
<div class="a t" style="left:148px;top:396.2px;line-height:18px;height:18px"><span class="k">Set</span> pbPromptButton <span class="k">to</span> <span class="k">False</span></div>
<div class="a t" style="left:28px;top:414.2px;line-height:18px;height:18px">39</div>
<div class="a t" style="left:116px;top:414.2px;line-height:18px;height:18px"><span class="k">End_Object</span></div>
<div class="a t" style="left:28px;top:432.2px;line-height:18px;height:18px">40</div>
<div class="a t" style="left:28px;top:450.2px;line-height:18px;height:18px">41</div>
<div class="a t" style="left:116px;top:450.2px;line-height:18px;height:18px"><span class="k">Object</span> oCustomerName <span class="k">is a</span> cWebColumn</div>
<div class="a t" style="left:28px;top:468.2px;line-height:18px;height:18px">42</div>
<div class="a t" style="left:148px;top:468.2px;line-height:18px;height:18px"><span class="k">Entry_Item</span> Customer<span class="k">.Name</span></div>
<div class="a t" style="left:28px;top:486.2px;line-height:18px;height:18px">43</div>
<div class="a t" style="left:148px;top:486.2px;line-height:18px;height:18px"><span class="k">Set</span> piWidth <span class="k">to</span> 228</div>
<div class="a t" style="left:28px;top:504.2px;line-height:18px;height:18px">44</div>
<div class="a t" style="left:148px;top:504.2px;line-height:18px;height:18px"><span class="k">Set</span> psCaption <span class="k">to</span> <span class="s">"Name"</span></div>
<div class="a t" style="left:28px;top:522.2px;line-height:18px;height:18px">45</div>
<div class="a t" style="left:148px;top:522.2px;line-height:18px;height:18px"><span class="k">Set</span> pbPromptButton <span class="k">to</span> <span class="k">False</span></div>
<div class="a t" style="left:28px;top:540.2px;line-height:18px;height:18px">46</div>
<div class="a t" style="left:116px;top:540.2px;line-height:18px;height:18px"><span class="k">End_Object</span></div>
<div class="a t" style="left:28px;top:558.2px;line-height:18px;height:18px">47</div>
<div class="a t" style="left:28px;top:576.2px;line-height:18px;height:18px">48</div>
<div class="a t" style="left:116px;top:576.2px;line-height:18px;height:18px"><span class="k">Object</span> oCustomerAddress <span class="k">is a</span> cWebColumn</div>
<div class="a t" style="left:28px;top:594.2px;line-height:18px;height:18px">49</div>
<div class="a t" style="left:148px;top:594.2px;line-height:18px;height:18px"><span class="k">Entry_Item</span> Customer<span class="k">.Address</span></div>
<div class="a t" style="left:28px;top:612.2px;line-height:18px;height:18px">50</div>
<div class="a t" style="left:148px;top:612.2px;line-height:18px;height:18px"><span class="k">Set</span> piWidth <span class="k">to</span> 355</div>
<div class="a t" style="left:28px;top:630.2px;line-height:18px;height:18px">51</div>
<div class="a t" style="left:148px;top:630.2px;line-height:18px;height:18px"><span class="k">Set</span> psCaption <span class="k">to</span> <span class="s">"Address"</span></div>
<div class="a t" style="left:28px;top:648.2px;line-height:18px;height:18px">52</div>
<div class="a t" style="left:116px;top:648.2px;line-height:18px;height:18px"><span class="k">End_Object</span></div>
<div class="a t" style="left:28px;top:666.2px;line-height:18px;height:18px">53</div>
</div>
<div class="a" style="left:680.5px;top:411px;width:1.5px;height:18px;background:#000;"></div>
<div class="a" style="left:394px;top:315px;width:634px;height:372px;border:3px solid #e53f0a;box-sizing:border-box;"></div>
<div class="a" style="left:1609.2px;top:123.2px;width:15.5px;height:681px;background:#f0f0f0;"></div>
<div class="a" style="left:1609.2px;top:123.8px;width:14.7px;height:5.8px;background:#cbcacc;"></div>
<div class="a" style="left:1609.2px;top:273.5px;width:14.7px;height:311.2px;background:#cdcdcd;"></div>
<svg style="left:1616.7px;top:139px;" width="1" height="1" viewBox="0 0 1 1"><path d="M-3.500 2L0 -1.500L3.500 2" stroke="#4a4a4a" stroke-width="2" fill="none"/></svg>
<svg style="left:1616.7px;top:795.7px;" width="1" height="1" viewBox="0 0 1 1"><path d="M-3.500 -2L0 1.500L3.500 -2" stroke="#4a4a4a" stroke-width="2" fill="none"/></svg>
<div class="a" style="left:316px;top:804.5px;width:1293.2px;height:16px;background:#f0f0f0;"></div>
<div class="a" style="left:316px;top:805px;width:7px;height:15px;background:#d0d0d6;"></div>
<div class="a" style="left:340px;top:805.5px;width:869px;height:14.5px;background:#cdcdcd;"></div>
<svg style="left:331.4px;top:812.3px;" width="1" height="1" viewBox="0 0 1 1"><path d="M1.500 -3.500L-2 0L1.500 3.500" stroke="#4a4a4a" stroke-width="2" fill="none"/></svg>
<svg style="left:1600px;top:812.3px;" width="1" height="1" viewBox="0 0 1 1"><path d="M-1.500 -3.500L2 0L-1.500 3.500" stroke="#4a4a4a" stroke-width="2" fill="none"/></svg>
<div class="a" style="left:1627px;top:101px;width:4.3px;height:916.5px;background:#f7f7fa;"></div>
<div class="a" style="left:1631px;top:101px;width:289px;height:20px;background:#c1cedd;border:1px solid #a3abb8;box-sizing:border-box;"></div>
<div class="a t" style="left:1635.3px;top:103.6px;height:16px;line-height:16px;letter-spacing:-0.212px;">Workspace Explorer</div>
<svg style="left:1891px;top:106px;" width="6" height="10" viewBox="0 0 6 10"><path d="M1.5 0.5H4.5M1.5 0V6M4.5 0V6M3.5 0V6M0 6.5H6M3 7V10" stroke="#1e1e1e" stroke-width="1" fill="none"/></svg>
<svg style="left:1908.5px;top:108px;" width="6" height="6" viewBox="0 0 6 6"><path d="M0 0L6 6M6 0L0 6" stroke="#1e1e1e" stroke-width="1.1" fill="none"/></svg>
<div class="a t" style="left:1636.7px;top:129.8px;height:16px;line-height:16px;letter-spacing:-0.152px;">Current Project:</div>
<div class="a" style="left:1726px;top:126px;width:193px;height:24px;background:#e2e2e2;border:1px solid #adadad;box-sizing:border-box;"></div>
<div class="a t" style="left:1730px;top:129.8px;height:16px;line-height:16px;letter-spacing:-0.134px;">WebApp.src</div>
<svg style="left:1909.7px;top:138.7px;" width="1" height="1" viewBox="0 0 1 1"><path d="M-4 -2L0 2L4 -2" stroke="#333" stroke-width="1" fill="none"/></svg>
<div class="a" style="left:1631px;top:154px;width:288px;height:307px;background:#fff;border:1px solid #828790;box-sizing:border-box;"></div>
<div class="a" style="left:1659px;top:173px;width:1px;height:208px;background:repeating-linear-gradient(to bottom,#555 0,#555 1px,transparent 1px,transparent 2px);"></div>
<div class="a" style="left:1674px;top:191px;width:1px;height:137px;background:repeating-linear-gradient(to bottom,#555 0,#555 1px,transparent 1px,transparent 2px);"></div>
<svg style="left:1640px;top:162px;" width="9" height="9" viewBox="0 0 9 9"><rect x="0.5" y="0.5" width="8" height="8" fill="#f4f4fa" stroke="#9898a4"/><path d="M2 4.5H7" stroke="#3b4a8c" stroke-width="1"/></svg>
<div class="a" style="left:1649px;top:166px;width:3px;height:1px;background:repeating-linear-gradient(to right,#555 0,#555 1px,transparent 1px,transparent 2px);"></div>
<svg style="left:1652px;top:158px;" width="15" height="15" viewBox="0 0 15 15"><path d="M2.500 1.500H14.500V11.500H9" fill="none" stroke="#3a3a3a"/><rect x="2" y="1" width="13" height="3" fill="#3a3a3a"/><circle cx="4.5" cy="10.5" r="3.8" fill="#fff" stroke="#3a3a3a" stroke-width="1"/><path d="M0.7000000000000002 10.5H8.3M4.5 6.7V14.3" stroke="#3a3a3a" stroke-width="0.8"/><ellipse cx="4.5" cy="10.5" rx="1.727272727272727" ry="3.8" fill="none" stroke="#3a3a3a" stroke-width="0.7"/></svg>
<div class="a t" style="left:1673.7px;top:157px;height:16px;line-height:16px;letter-spacing:-0.214px;">WebApp.src</div>
<svg style="left:1655px;top:180px;" width="9" height="9" viewBox="0 0 9 9"><rect x="0.5" y="0.5" width="8" height="8" fill="#f4f4fa" stroke="#9898a4"/><path d="M2 4.5H7" stroke="#3b4a8c" stroke-width="1"/></svg>
<div class="a" style="left:1664px;top:184px;width:3px;height:1px;background:repeating-linear-gradient(to right,#555 0,#555 1px,transparent 1px,transparent 2px);"></div>
<svg style="left:1667px;top:176px;" width="15" height="15" viewBox="0 0 15 15"><path d="M2.500 1.500H14.500V11.500H9" fill="none" stroke="#3a3a3a"/><rect x="2" y="1" width="13" height="3" fill="#3a3a3a"/><path d="M8 6.500H12M10 8.500H12" stroke="#3a3a3a"/><circle cx="4.5" cy="10.5" r="3.8" fill="#fff" stroke="#3a3a3a" stroke-width="1"/><path d="M0.7000000000000002 10.5H8.3M4.5 6.7V14.3" stroke="#3a3a3a" stroke-width="0.8"/><ellipse cx="4.5" cy="10.5" rx="1.727272727272727" ry="3.8" fill="none" stroke="#3a3a3a" stroke-width="0.7"/></svg>
<div class="a t" style="left:1688.3px;top:175px;height:16px;line-height:16px;letter-spacing:-0.322px;">Web Views (8)</div>
<div class="a" style="left:1701px;top:210.5px;width:80px;height:17.5px;background:#ececec;"></div>
<div class="a" style="left:1675px;top:202px;width:8px;height:1px;background:repeating-linear-gradient(to right,#555 0,#555 1px,transparent 1px,transparent 2px);"></div>
<svg style="left:1685px;top:196px;" width="10" height="11" viewBox="0 0 10 11"><path d="M0.5 0.500H6.500L9.500 3.500V10.500H0.500Z" fill="#fff" stroke="#3a3a3a" stroke-width="1.200"/><path d="M6.500 0.500V3.500H9.500" fill="none" stroke="#3a3a3a" stroke-width="0.8"/><path d="M2.500 4.500H7.500M2.500 6.500H7.500M2.500 8.500H7.500" stroke="#3a3a3a" stroke-width="1.200"/></svg>
<div class="a t" style="left:1703.6px;top:193.2px;height:16px;line-height:16px;letter-spacing:-0.009px;">ClientSortingDemo.wo</div>
<div class="a" style="left:1675px;top:220px;width:8px;height:1px;background:repeating-linear-gradient(to right,#555 0,#555 1px,transparent 1px,transparent 2px);"></div>
<svg style="left:1685px;top:214px;" width="10" height="11" viewBox="0 0 10 11"><path d="M0.5 0.500H6.500L9.500 3.500V10.500H0.500Z" fill="#fff" stroke="#3a3a3a" stroke-width="1.200"/><path d="M6.500 0.500V3.500H9.500" fill="none" stroke="#3a3a3a" stroke-width="0.8"/><path d="M2.500 4.500H7.500M2.500 6.500H7.500M2.500 8.500H7.500" stroke="#3a3a3a" stroke-width="1.200"/></svg>
<div class="a t" style="left:1703.6px;top:211.2px;height:16px;line-height:16px;letter-spacing:-0.19px;">Dashboard.wo</div>
<div class="a" style="left:1675px;top:238px;width:8px;height:1px;background:repeating-linear-gradient(to right,#555 0,#555 1px,transparent 1px,transparent 2px);"></div>
<svg style="left:1685px;top:232px;" width="10" height="11" viewBox="0 0 10 11"><path d="M0.5 0.500H6.500L9.500 3.500V10.500H0.500Z" fill="#fff" stroke="#3a3a3a" stroke-width="1.200"/><path d="M6.500 0.500V3.500H9.500" fill="none" stroke="#3a3a3a" stroke-width="0.8"/><path d="M2.500 4.500H7.500M2.500 6.500H7.500M2.500 8.500H7.500" stroke="#3a3a3a" stroke-width="1.200"/></svg>
<div class="a t" style="left:1703.6px;top:229.2px;height:16px;line-height:16px;letter-spacing:-0.215px;">ExpandPanelDemo.wo</div>
<div class="a" style="left:1675px;top:256px;width:8px;height:1px;background:repeating-linear-gradient(to right,#555 0,#555 1px,transparent 1px,transparent 2px);"></div>
<svg style="left:1685px;top:250px;" width="10" height="11" viewBox="0 0 10 11"><path d="M0.5 0.500H6.500L9.500 3.500V10.500H0.500Z" fill="#fff" stroke="#3a3a3a" stroke-width="1.200"/><path d="M6.500 0.500V3.500H9.500" fill="none" stroke="#3a3a3a" stroke-width="0.8"/><path d="M2.500 4.500H7.500M2.500 6.500H7.500M2.500 8.500H7.500" stroke="#3a3a3a" stroke-width="1.200"/></svg>
<div class="a t" style="left:1703.6px;top:247.2px;height:16px;line-height:16px;letter-spacing:0.06px;">InfiniteScrollingDemo.wo</div>
<div class="a" style="left:1675px;top:274px;width:8px;height:1px;background:repeating-linear-gradient(to right,#555 0,#555 1px,transparent 1px,transparent 2px);"></div>
<svg style="left:1685px;top:268px;" width="10" height="11" viewBox="0 0 10 11"><path d="M0.5 0.500H6.500L9.500 3.500V10.500H0.500Z" fill="#fff" stroke="#3a3a3a" stroke-width="1.200"/><path d="M6.500 0.500V3.500H9.500" fill="none" stroke="#3a3a3a" stroke-width="0.8"/><path d="M2.500 4.500H7.500M2.500 6.500H7.500M2.500 8.500H7.500" stroke="#3a3a3a" stroke-width="1.200"/></svg>
<div class="a t" style="left:1703.6px;top:265.2px;height:16px;line-height:16px;letter-spacing:0.02px;">Login.wo</div>
<div class="a" style="left:1675px;top:292px;width:8px;height:1px;background:repeating-linear-gradient(to right,#555 0,#555 1px,transparent 1px,transparent 2px);"></div>
<svg style="left:1685px;top:286px;" width="10" height="11" viewBox="0 0 10 11"><path d="M0.5 0.500H6.500L9.500 3.500V10.500H0.500Z" fill="#fff" stroke="#3a3a3a" stroke-width="1.200"/><path d="M6.500 0.500V3.500H9.500" fill="none" stroke="#3a3a3a" stroke-width="0.8"/><path d="M2.500 4.500H7.500M2.500 6.500H7.500M2.500 8.500H7.500" stroke="#3a3a3a" stroke-width="1.200"/></svg>
<div class="a t" style="left:1703.6px;top:283.2px;height:16px;line-height:16px;letter-spacing:-0.059px;">ManualLoadedListDemo.wo</div>
<div class="a" style="left:1675px;top:310px;width:8px;height:1px;background:repeating-linear-gradient(to right,#555 0,#555 1px,transparent 1px,transparent 2px);"></div>
<svg style="left:1685px;top:304px;" width="10" height="11" viewBox="0 0 10 11"><path d="M0.5 0.500H6.500L9.500 3.500V10.500H0.500Z" fill="#fff" stroke="#3a3a3a" stroke-width="1.200"/><path d="M6.500 0.500V3.500H9.500" fill="none" stroke="#3a3a3a" stroke-width="0.8"/><path d="M2.500 4.500H7.500M2.500 6.500H7.500M2.500 8.500H7.500" stroke="#3a3a3a" stroke-width="1.200"/></svg>
<div class="a t" style="left:1703.6px;top:301.2px;height:16px;line-height:16px;letter-spacing:-0.083px;">RowLayoutDemo.wo</div>
<div class="a" style="left:1675px;top:328px;width:8px;height:1px;background:repeating-linear-gradient(to right,#555 0,#555 1px,transparent 1px,transparent 2px);"></div>
<svg style="left:1685px;top:322px;" width="10" height="11" viewBox="0 0 10 11"><path d="M0.5 0.500H6.500L9.500 3.500V10.500H0.500Z" fill="#fff" stroke="#3a3a3a" stroke-width="1.200"/><path d="M6.500 0.500V3.500H9.500" fill="none" stroke="#3a3a3a" stroke-width="0.8"/><path d="M2.500 4.500H7.500M2.500 6.500H7.500M2.500 8.500H7.500" stroke="#3a3a3a" stroke-width="1.200"/></svg>
<div class="a t" style="left:1703.6px;top:319.2px;height:16px;line-height:16px;letter-spacing:-0.019px;">ScrollingDemo.wo</div>
<svg style="left:1655px;top:342px;" width="9" height="9" viewBox="0 0 9 9"><rect x="0.5" y="0.5" width="8" height="8" fill="#f4f4fa" stroke="#9898a4"/><path d="M2 4.5H7M4.5 2V7" stroke="#3b4a8c" stroke-width="1"/></svg>
<div class="a" style="left:1664px;top:346px;width:3px;height:1px;background:repeating-linear-gradient(to right,#555 0,#555 1px,transparent 1px,transparent 2px);"></div>
<div class="a t" style="left:1688.3px;top:337px;height:16px;line-height:16px;letter-spacing:-0.063px;">Web Components (2)</div>
<svg style="left:1655px;top:360px;" width="9" height="9" viewBox="0 0 9 9"><rect x="0.5" y="0.5" width="8" height="8" fill="#f4f4fa" stroke="#9898a4"/><path d="M2 4.5H7M4.5 2V7" stroke="#3b4a8c" stroke-width="1"/></svg>
<div class="a" style="left:1664px;top:364px;width:3px;height:1px;background:repeating-linear-gradient(to right,#555 0,#555 1px,transparent 1px,transparent 2px);"></div>
<div class="a t" style="left:1688.3px;top:355px;height:16px;line-height:16px;letter-spacing:-0.175px;">Data Dictionaries (3)</div>
<svg style="left:1655px;top:378px;" width="9" height="9" viewBox="0 0 9 9"><rect x="0.5" y="0.5" width="8" height="8" fill="#f4f4fa" stroke="#9898a4"/><path d="M2 4.5H7M4.5 2V7" stroke="#3b4a8c" stroke-width="1"/></svg>
<div class="a" style="left:1664px;top:382px;width:3px;height:1px;background:repeating-linear-gradient(to right,#555 0,#555 1px,transparent 1px,transparent 2px);"></div>
<div class="a t" style="left:1688.3px;top:373px;height:16px;line-height:16px;letter-spacing:-0.254px;">Other Files (11)</div>
<svg style="left:1667px;top:338px;" width="16" height="15" viewBox="0 0 16 15"><circle cx="5" cy="9.5" r="4.2" fill="#fff" stroke="#3a3a3a" stroke-width="1"/><path d="M0.7999999999999998 9.5H9.2M5 5.3V13.7" stroke="#3a3a3a" stroke-width="0.8"/><ellipse cx="5" cy="9.5" rx="1.909090909090909" ry="4.2" fill="none" stroke="#3a3a3a" stroke-width="0.7"/><circle cx="11" cy="4" r="3" fill="#fff" stroke="#3a3a3a" stroke-width="1.4"/><circle cx="11" cy="4" r="0.800" fill="#3a3a3a"/></svg>
<svg style="left:1667px;top:356px;" width="16" height="13" viewBox="0 0 16 13"><path d="M0.5 1.500H6.500L7.500 2.500L8.500 1.500H14.500V11.500H8.500L7.500 12.500L6.500 11.500H0.500Z M7.500 2.500V12" fill="#fff" stroke="#3a3a3a" stroke-width="1.1"/></svg>
<svg style="left:1669px;top:375px;" width="12" height="13" viewBox="0 0 12 13"><path d="M4.500 2V0.500H9.500L11.500 2.500V9.500H10" fill="none" stroke="#3a3a3a"/><path d="M2.500 4V2.500H7.500L9.500 4.500V11.500H8" fill="#fff" stroke="#3a3a3a"/><path d="M0.500 4.500H5.500L7.500 6.500V12.500H0.500Z" fill="#fff" stroke="#3a3a3a" stroke-width="1.200"/><path d="M2 7.500H6M2 9.500H6M2 11H6" stroke="#3a3a3a" stroke-width="0.900"/></svg>
<div class="a" style="left:1631px;top:486px;width:289px;height:531.5px;background:#f0f0f0;"></div>
<div class="a" style="left:1631px;top:466px;width:289px;height:20px;background:#c1cedd;border:1px solid #a3abb8;box-sizing:border-box;"></div>
<div class="a t" style="left:1635.3px;top:468.6px;height:16px;line-height:16px;letter-spacing:-0.161px;">Properties (Inactive)</div>
<svg style="left:1891px;top:471px;" width="6" height="10" viewBox="0 0 6 10"><path d="M1.5 0.5H4.5M1.5 0V6M4.5 0V6M3.5 0V6M0 6.5H6M3 7V10" stroke="#1e1e1e" stroke-width="1" fill="none"/></svg>
<svg style="left:1908.5px;top:473px;" width="6" height="6" viewBox="0 0 6 6"><path d="M0 0L6 6M6 0L0 6" stroke="#1e1e1e" stroke-width="1.1" fill="none"/></svg>
<div class="a" style="left:1674px;top:493px;width:239px;height:24px;background:#f1f1f1;border:1px solid #dcdcdc;box-sizing:border-box;box-shadow:inset 0 0 0 1px #fafafa;"></div>
<div class="a" style="left:1674px;top:525.5px;width:239px;height:23.5px;background:#f1f1f1;border:1px solid #dcdcdc;box-sizing:border-box;box-shadow:inset 0 0 0 1px #fafafa;"></div>
<div class="a" style="left:1632.5px;top:564px;width:283px;height:427px;background:#f0f0f0;border:1px solid #dfdfdf;box-sizing:border-box;box-shadow:inset 1px 1px 0 #fafafa;"></div>
<div class="a t" style="left:1726px;top:572.7px;height:16px;line-height:16px;font-weight:bold;letter-spacing:0.001px;">Nothing to Model</div>
<div class="a t" style="left:1641.3px;top:603px;height:16px;line-height:16px;letter-spacing:-0.112px;">No object, class or table is currently selected.</div>
<div class="a t" style="left:1641.3px;top:633px;height:16px;line-height:16px;letter-spacing:0.145px;">Hint:</div>
<div class="a t" style="left:1642px;top:656px;height:16px;line-height:16px;">•</div>
<div class="a t" style="left:1650px;top:656px;height:16px;line-height:16px;letter-spacing:-0.198px;">Select an object or a class via <span style="color:#2a6db5;text-decoration:underline">Code Explorer</span> or</div>
<div class="a t" style="left:1650px;top:671px;height:16px;line-height:16px;letter-spacing:-0.114px;">the Visual Designer to view its properties.</div>
<div class="a t" style="left:1642px;top:694.3px;height:16px;line-height:16px;">•</div>
<div class="a t" style="left:1650px;top:694.3px;height:16px;line-height:16px;letter-spacing:-0.058px;">In the Code Editor position the cursor inside an</div>
<div class="a t" style="left:1650px;top:709px;height:16px;line-height:16px;letter-spacing:-0.148px;">object or a class declaration and press Ctrl+F7.</div>
<div class="a t" style="left:1642px;top:732px;height:16px;line-height:16px;">•</div>
<div class="a t" style="left:1650px;top:732px;height:16px;line-height:16px;letter-spacing:-0.185px;">Select a Table via <span style="color:#2a6db5;text-decoration:underline">Table Explorer</span> or the Table</div>
<div class="a t" style="left:1650px;top:747px;height:16px;line-height:16px;letter-spacing:-0.01px;">Editor to view its attribute properties.</div>
<div class="a" style="left:1631.5px;top:994px;width:135px;height:23px;background:#fbfbfc;"></div>
<div class="a" style="left:1767px;top:995px;width:144.5px;height:20px;background:#f0f0f3;border:1px solid #d4d4da;box-sizing:border-box;"></div>
<div class="a t" style="left:1655px;top:997.7px;height:16px;line-height:16px;letter-spacing:-0.113px;">Properties (Inactive)</div>
<div class="a t" style="left:1790px;top:996.7px;height:16px;line-height:16px;letter-spacing:-0.21px;">DDO Explorer [Scrolli...</div>
<svg style="left:1637px;top:999px;" width="14" height="14" viewBox="0 0 14 14"><rect x="3.500" y="0.500" width="10" height="12" fill="#fff" stroke="#444"/><path d="M5 3.500H12M5 6.500H12M5 9.500H12M8.500 1V12" stroke="#444" stroke-width="1"/><path d="M0 6C0 4 3 4 3 6V9L2 10V13H1V10L0 9Z" fill="#444"/></svg>
<svg style="left:1772px;top:997px;" width="15" height="15" viewBox="0 0 15 15"><path d="M7 1.500A4 1.800 0 0 1 15 1.500V7A4 1.800 0 0 1 7 7Z" fill="#444"/><ellipse cx="11" cy="1.800" rx="3" ry="1.100" fill="#ccc"/><path d="M4.500 6V9.500M1.500 12V9.500H7.500V12" fill="none" stroke="#444"/><rect x="3" y="4" width="3" height="3" fill="#444"/><rect x="0" y="11" width="3" height="3" fill="#444"/><rect x="6" y="11" width="3" height="3" fill="#444"/></svg>
<div class="a" style="left:314px;top:827.5px;width:1312.5px;height:19.5px;background:#c1cedd;border:1px solid #a3abb8;box-sizing:border-box;"></div>
<div class="a t" style="left:318.5px;top:830px;height:16px;line-height:16px;letter-spacing:0.246px;">Output</div>
<svg style="left:1597.5px;top:832.5px;" width="6" height="10" viewBox="0 0 6 10"><path d="M1.5 0.5H4.5M1.5 0V6M4.5 0V6M3.5 0V6M0 6.5H6M3 7V10" stroke="#1e1e1e" stroke-width="1" fill="none"/></svg>
<svg style="left:1615px;top:834.5px;" width="6" height="6" viewBox="0 0 6 6"><path d="M0 0L6 6M6 0L0 6" stroke="#1e1e1e" stroke-width="1.1" fill="none"/></svg>
<svg style="left:320.5px;top:853px;" width="14" height="14" viewBox="0 0 14 14"><path d="M0.5 3.500H6.500M0.500 3.500L3.500 0.500M0.500 3.500L3.500 6.500" stroke="#1f6fb0" stroke-width="2.200" fill="none"/><circle cx="9" cy="7.500" r="3.200" fill="none" stroke="#3a3a3a" stroke-width="1.3"/><path d="M6.800 9.800L2.500 13.500" stroke="#3a3a3a" stroke-width="1.8"/></svg>
<svg style="left:342.5px;top:853px;" width="14" height="14" viewBox="0 0 14 14"><path d="M0.5 3.500H6.500M6.500 3.500L3.500 0.500M6.500 3.500L3.500 6.500" stroke="#1f6fb0" stroke-width="2.200" fill="none"/><circle cx="9" cy="7.500" r="3.200" fill="none" stroke="#3a3a3a" stroke-width="1.3"/><path d="M6.800 9.800L2.500 13.500" stroke="#3a3a3a" stroke-width="1.8"/></svg>
<div class="a" style="left:362px;top:852px;width:1px;height:19px;background:#cfcfd6;"></div>
<svg style="left:371px;top:853px;" width="12" height="14" viewBox="0 0 12 14"><path d="M4.500 3.500V0.500H9.500L11.500 2.500V9.500H8.500" fill="none" stroke="#3a3a3a" stroke-width="1.1"/><path d="M0.500 3.500H5.500L7.500 5.500V13.500H0.500Z" fill="#fff" stroke="#3a3a3a" stroke-width="1.1"/></svg>
<svg style="left:392px;top:853px;" width="13" height="13" viewBox="0 0 13 13"><path d="M1 1L12 12M12 1.500L1 12" stroke="#b5231c" stroke-width="2.200" fill="none" stroke-linecap="round"/></svg>
<div class="a" style="left:412px;top:852px;width:1px;height:19px;background:#cfcfd6;"></div>
<svg style="left:419.5px;top:853px;" width="14" height="14" viewBox="0 0 14 14"><path d="M0.500 8.500V0.500H9.500" fill="none" stroke="#3a3a3a"/><path d="M2.500 10.500V2.500H11.500" fill="none" stroke="#3a3a3a"/><rect x="4.500" y="4.500" width="9" height="9" fill="#fff" stroke="#3a3a3a"/><path d="M6.500 9H11.500M9 6.500V11.500" stroke="#1f6fb0" stroke-width="1.500" fill="none"/></svg>
<svg style="left:441.5px;top:853px;" width="14" height="14" viewBox="0 0 14 14"><path d="M0.500 8.500V0.500H9.500" fill="none" stroke="#3a3a3a"/><path d="M2.500 10.500V2.500H11.500" fill="none" stroke="#3a3a3a"/><rect x="4.500" y="4.500" width="9" height="9" fill="#fff" stroke="#3a3a3a"/><path d="M6.500 9H11.500" stroke="#1f6fb0" stroke-width="1.500" fill="none"/></svg>
<div class="a" style="left:314px;top:873px;width:1312.5px;height:119.5px;background:#fff;border:1px solid #828790;box-sizing:border-box;"></div>
<div class="a" style="left:327px;top:874px;width:1px;height:100px;background:repeating-linear-gradient(to bottom,#555 0,#555 1px,transparent 1px,transparent 2px);"></div>
<div class="a" style="left:342px;top:874px;width:1px;height:64px;background:repeating-linear-gradient(to bottom,#555 0,#555 1px,transparent 1px,transparent 2px);"></div>
<div class="a" style="left:343px;top:884px;width:8px;height:1px;background:repeating-linear-gradient(to right,#555 0,#555 1px,transparent 1px,transparent 2px);"></div>
<svg style="left:354px;top:878px;" width="9" height="12" viewBox="0 0 9 12"><path d="M1 1L7.500 6L1 11Z" fill="#fff" stroke="#4a4a4a" stroke-width="1"/></svg>
<div class="a t" style="left:371.3px;top:875.9px;height:16px;line-height:16px;letter-spacing:-0.31px;">Total Pages</div>
<div class="a t" style="left:442.7px;top:875.9px;height:16px;line-height:16px;letter-spacing:-0.347px;">: 0</div>
<div class="a" style="left:343px;top:902px;width:8px;height:1px;background:repeating-linear-gradient(to right,#555 0,#555 1px,transparent 1px,transparent 2px);"></div>
<svg style="left:354px;top:896px;" width="9" height="12" viewBox="0 0 9 12"><path d="M1 1L7.500 6L1 11Z" fill="#fff" stroke="#4a4a4a" stroke-width="1"/></svg>
<div class="a t" style="left:371.3px;top:893.9px;height:16px;line-height:16px;letter-spacing:-0.318px;">Static Data</div>
<div class="a t" style="left:439px;top:893.9px;height:16px;line-height:16px;letter-spacing:-0.589px;">: 334649</div>
<div class="a" style="left:343px;top:920px;width:8px;height:1px;background:repeating-linear-gradient(to right,#555 0,#555 1px,transparent 1px,transparent 2px);"></div>
<svg style="left:354px;top:914px;" width="9" height="12" viewBox="0 0 9 12"><path d="M1 1L7.500 6L1 11Z" fill="#fff" stroke="#4a4a4a" stroke-width="1"/></svg>
<div class="a t" style="left:371.3px;top:911.9px;height:16px;line-height:16px;letter-spacing:-0.495px;">Message area</div>
<div class="a t" style="left:450.8px;top:911.9px;height:16px;line-height:16px;letter-spacing:-0.564px;">: 210468</div>
<div class="a" style="left:343px;top:938px;width:8px;height:1px;background:repeating-linear-gradient(to right,#555 0,#555 1px,transparent 1px,transparent 2px);"></div>
<svg style="left:354px;top:932px;" width="9" height="12" viewBox="0 0 9 12"><path d="M1 1L7.500 6L1 11Z" fill="#fff" stroke="#4a4a4a" stroke-width="1"/></svg>
<div class="a t" style="left:371.3px;top:929.9px;height:16px;line-height:16px;letter-spacing:-0.136px;">Total Blocks</div>
<div class="a t" style="left:443px;top:929.9px;height:16px;line-height:16px;letter-spacing:-0.548px;">: 13239</div>
<div class="a" style="left:328px;top:956px;width:7px;height:1px;background:repeating-linear-gradient(to right,#555 0,#555 1px,transparent 1px,transparent 2px);"></div>
<div class="a" style="left:328px;top:974px;width:7px;height:1px;background:repeating-linear-gradient(to right,#555 0,#555 1px,transparent 1px,transparent 2px);"></div>
<svg style="left:336px;top:949px;" width="14" height="14" viewBox="0 0 14 14"><circle cx="7" cy="7" r="6.500" fill="#2d2d2d"/><rect x="3.800" y="3.800" width="6.400" height="6.400" rx="1" fill="#fff"/><rect x="5.300" y="5.300" width="3.400" height="3.400" fill="#2d2d2d"/></svg>
<svg style="left:336px;top:967px;" width="14" height="14" viewBox="0 0 14 14"><circle cx="7" cy="7" r="6.800" fill="#1f8ad2"/><rect x="6" y="5.800" width="2" height="5.200" fill="#fff"/><circle cx="7" cy="3.700" r="1.200" fill="#fff"/></svg>
<div class="a t" style="left:356.6px;top:947.9px;height:16px;line-height:16px;letter-spacing:0.251px;">----Compile Finished----</div>
<div class="a" style="left:354px;top:965.5px;width:211.5px;height:17px;background:#e9e9ec;"></div>
<div class="a t" style="left:356.6px;top:965.9px;height:16px;line-height:16px;letter-spacing:-0.057px;">Starting web application: WebListDemo</div>
<div class="a" style="left:1608.5px;top:874px;width:16.5px;height:117.5px;background:#f0f0f0;"></div>
<div class="a" style="left:1609.3px;top:956.7px;width:14.4px;height:17.3px;background:#cdcdcd;"></div>
<svg style="left:1616.5px;top:884.3px;" width="1" height="1" viewBox="0 0 1 1"><path d="M-3.500 2L0 -1.500L3.500 2" stroke="#4a4a4a" stroke-width="2" fill="none"/></svg>
<svg style="left:1616.5px;top:982.8px;" width="1" height="1" viewBox="0 0 1 1"><path d="M-3.500 -2L0 1.500L3.500 -2" stroke="#4a4a4a" stroke-width="2" fill="none"/></svg>
<div class="a" style="left:314px;top:994px;width:69.5px;height:23px;background:#fbfbfc;"></div>
<div class="a" style="left:384px;top:995px;width:152.2px;height:20px;background:#f1f1f4;border:1px solid #d9d9de;box-sizing:border-box;"></div>
<div class="a t" style="left:407px;top:996.6px;height:16px;line-height:16px;letter-spacing:-0.174px;">To Do List [WebApp.src]</div>
<div class="a" style="left:535.2px;top:995px;width:92px;height:20px;background:#f1f1f4;border:1px solid #d9d9de;box-sizing:border-box;"></div>
<div class="a t" style="left:560px;top:996.6px;height:16px;line-height:16px;letter-spacing:-0.308px;">Find Results</div>
<div class="a" style="left:626.2px;top:995px;width:90.6px;height:20px;background:#f1f1f4;border:1px solid #d9d9de;box-sizing:border-box;"></div>
<div class="a t" style="left:651px;top:996.6px;height:16px;line-height:16px;letter-spacing:-0.125px;">Breakpoints</div>
<div class="a" style="left:715.8px;top:995px;width:205.5px;height:20px;background:#f1f1f4;border:1px solid #d9d9de;box-sizing:border-box;"></div>
<div class="a t" style="left:741px;top:996.6px;height:16px;line-height:16px;letter-spacing:-0.028px;">Problem Resolution [WebApp.src]</div>
<div class="a t" style="left:338.5px;top:997.6px;height:16px;line-height:16px;letter-spacing:0.229px;">Output</div>
<svg style="left:320px;top:999px;" width="15" height="13" viewBox="0 0 15 13"><path d="M5.500 2.500V0.500H0.500V12.500H12.500V9" fill="none" stroke="#3a3a3a" stroke-width="1.1"/><path d="M3 6.500H13M9.500 3L13 6.500L9.500 10" fill="none" stroke="#3a3a3a" stroke-width="1.600"/></svg>
<svg style="left:389px;top:997px;" width="13" height="15" viewBox="0 0 13 15"><rect x="0.500" y="2.500" width="9" height="12" fill="#fff" stroke="#3a3a3a"/><rect x="3" y="0.500" width="4" height="3" fill="#fff" stroke="#3a3a3a"/><path d="M3 8L5 11L11 3" fill="none" stroke="#3a3a3a" stroke-width="1.500"/></svg>
<svg style="left:541px;top:998px;" width="13" height="14" viewBox="0 0 13 14"><path d="M3.500 5V0.500H9.500L12.500 3.500V13.500H7" fill="#fff" stroke="#3a3a3a"/><circle cx="5" cy="9" r="2.800" fill="#fff" stroke="#1f6fb0" stroke-width="1.200"/><path d="M3 11L0.500 13.500" stroke="#1f6fb0" stroke-width="1.500"/></svg>
<svg style="left:632px;top:997px;" width="15" height="15" viewBox="0 0 15 15"><path d="M4.500 1.500H14.500V11.500H10" fill="none" stroke="#3a3a3a"/><rect x="4" y="1" width="11" height="3" fill="#3a3a3a"/><circle cx="5" cy="10" r="4.500" fill="#d81b1b"/></svg>
<svg style="left:723px;top:998px;" width="15" height="14" viewBox="0 0 15 14"><rect x="0.500" y="0.500" width="14" height="13" fill="#fff" stroke="#3a3a3a"/><rect x="0" y="0" width="15" height="3" fill="#3a3a3a"/><path d="M2 12L5 6L8 12Z" fill="#f2c21a" stroke="#a87d00" stroke-width="0.500"/><path d="M8.500 8L10 10.500L13 5.500" fill="none" stroke="#3a3a3a" stroke-width="1.300"/></svg>
<div class="a" style="left:0px;top:1017.5px;width:1920px;height:22.5px;background:#0f7ccc;"></div>
<div class="a t" style="left:3.5px;top:1022.2px;height:16px;line-height:16px;color:#fff;letter-spacing:0.063px;">C:\projects\WebListDemo\AppSrc\ScrollingDemo.wo</div>
<div class="a t" style="left:1537px;top:1022.2px;height:16px;line-height:16px;color:#fff;letter-spacing:-0.346px;">Ln 32</div>
<div class="a t" style="left:1577.3px;top:1022.2px;height:16px;line-height:16px;color:#fff;letter-spacing:-0.281px;">Col 40</div>
<svg style="left:1691px;top:1022px;" width="16" height="16" viewBox="0 0 16 16"><circle cx="8" cy="8" r="7.800" fill="#fff"/><circle cx="8" cy="8" r="6.500" fill="#fff" stroke="#b9202b" stroke-width="1.300"/><rect x="7" y="3.500" width="2" height="6" fill="#c2262e"/><rect x="7" y="10.800" width="2" height="2" fill="#c2262e"/></svg>
<svg style="left:1759px;top:1022px;" width="16" height="16" viewBox="0 0 16 16"><circle cx="8" cy="8" r="7.300" fill="#e4e7ea" stroke="#fff" stroke-width="1.200"/><circle cx="8" cy="8" r="5.600" fill="none" stroke="#5c6065" stroke-width="1.800"/><path d="M4 4L12 12" stroke="#5c6065" stroke-width="1.800"/></svg>
<div class="a t" style="left:1793.3px;top:1022.2px;height:16px;line-height:16px;color:#fff;letter-spacing:-0.668px;">INS</div>
<div class="a t" style="left:1837.3px;top:1022.2px;height:16px;line-height:16px;color:#6ab3ea;letter-spacing:-0.995px;">CAPS</div>
<div class="a t" style="left:1881.3px;top:1022.2px;height:16px;line-height:16px;color:#fff;letter-spacing:0.124px;">NUM</div>
<div class="a" style="left:0px;top:1040px;width:1920px;height:40px;background:#1c3f8c;"></div>
<div class="a" style="left:196.3px;top:1040px;width:48px;height:40px;background:#2d58a6;"></div>
<div class="a" style="left:151.5px;top:1078px;width:39.5px;height:2px;background:#8fb4ea;"></div>
<div class="a" style="left:196px;top:1078px;width:48px;height:2px;background:#a9c6f2;"></div>
<svg style="left:16px;top:1052px;" width="16" height="16" viewBox="0 0 16 16"><path d="M0 2.300L6.500 1.400V7.600H0ZM7.500 1.250L16 0V7.600H7.500ZM0 8.400H6.500V14.600L0 13.700ZM7.500 8.400H16V16L7.500 14.750Z" fill="#fff"/></svg>
<svg style="left:63px;top:1051px;" width="18" height="18" viewBox="0 0 18 18"><circle cx="10.500" cy="6.500" r="5" fill="none" stroke="#fff" stroke-width="1.500"/><path d="M7 10.500L1 16.500" stroke="#fff" stroke-width="1.800"/></svg>
<svg style="left:111.5px;top:1052px;" width="17" height="16" viewBox="0 0 17 16"><path d="M0.600 3V0.600H11.400V3M0.600 12.500V15H11.400V12.500" fill="none" stroke="#fff" stroke-width="1.200"/><rect x="1.600" y="4.600" width="8.800" height="6.300" fill="none" stroke="#fff" stroke-width="1.200"/><path d="M14.500 0V4.500M14.500 10.500V15.500" stroke="#fff" stroke-width="1.200"/><rect x="13.600" y="6.300" width="2" height="2.400" fill="#fff"/></svg>
<svg style="left:159px;top:1048px;" width="24" height="24" viewBox="0 0 24 24"><circle cx="12" cy="12" r="11.500" fill="#fff"/><path d="M12 12L2.040 6.250A11.500 11.500 0 0 1 21.960 6.250Z" fill="#db4437"/><path d="M12 12L21.960 6.250A11.500 11.500 0 0 1 12 23.500Z" fill="#f4c20d"/><path d="M12 12L12 23.500A11.500 11.500 0 0 1 2.040 6.250Z" fill="#0f9d58"/><circle cx="12" cy="12" r="5.200" fill="#fff"/><circle cx="12" cy="12" r="4.200" fill="#4285f4"/></svg>
<svg style="left:207.6px;top:1048.3px;" width="25" height="23" viewBox="0 0 25 23"><path d="M0 0H25V18L20 23H0Z" fill="#d8431a"/><text x="12.500" y="16.500" font-size="13" font-weight="bold" fill="#fff" text-anchor="middle" font-family="Liberation Sans,sans-serif" letter-spacing="-0.5">DF</text></svg>
<div class="a" style="left:616.5px;top:431px;width:363px;height:19.5px;background:#ffffe1;border:1px solid #6e6e6e;box-sizing:border-box;box-shadow:2px 2px 2px rgba(0,0,0,0.35);"></div>
<div class="a t" style="left:623.3px;top:433px;height:16px;line-height:16px;letter-spacing:-0.144px;">Property</div>
<div class="a t" style="left:671.7px;top:433px;height:16px;line-height:16px;font-weight:bold;letter-spacing:-0.52px;">Boolean</div>
<div class="a t" style="left:719.6px;top:433px;height:16px;line-height:16px;font-weight:bold;letter-spacing:-0.41px;">pbAutoColumnSizing</div>
<div class="a t" style="left:838.3px;top:433px;height:16px;line-height:16px;letter-spacing:0.113px;">// { WebProperty=Client }</div>
<div class="a" style="left:613.5px;top:457.5px;width:374px;height:194px;background:#fff;border:1px solid #c6c6c6;box-sizing:border-box;box-shadow:2.500px 2.500px 2px rgba(40,40,40,0.7);"></div>
<div class="a" style="left:636.3px;top:536.4px;width:333px;height:18.3px;background:#3398fd;border:1px dotted #1b1b1b;box-sizing:border-box;"></div>
<svg style="left:621.7px;top:465px;" width="10" height="9" viewBox="0 0 10 9"><rect x="0.500" y="0.500" width="9" height="8" fill="#e4e4ea" stroke="#8a8a90"/><path d="M3.500 3H6.500M3.500 4.500H6.500M3.500 6H6.500" stroke="#5a5a60" stroke-width="0.800"/></svg>
<div class="a t" style="left:640px;top:461.9px;height:16px;line-height:16px;letter-spacing:-0.22px;">faCompressed</div>
<svg style="left:621.7px;top:484px;" width="10" height="9" viewBox="0 0 10 9"><rect x="0.500" y="0.500" width="9" height="8" fill="#e4e4ea" stroke="#8a8a90"/><path d="M3.500 3H6.500M3.500 4.500H6.500M3.500 6H6.500" stroke="#5a5a60" stroke-width="0.800"/></svg>
<div class="a t" style="left:640px;top:480.88px;height:16px;line-height:16px;letter-spacing:-0.001px;">faDirectory</div>
<svg style="left:621.7px;top:503px;" width="10" height="9" viewBox="0 0 10 9"><rect x="0.500" y="0.500" width="9" height="8" fill="#e4e4ea" stroke="#8a8a90"/><path d="M3.500 3H6.500M3.500 4.500H6.500M3.500 6H6.500" stroke="#5a5a60" stroke-width="0.800"/></svg>
<div class="a t" style="left:640px;top:499.86px;height:16px;line-height:16px;letter-spacing:-0.131px;">faEncrypted</div>
<svg style="left:621.7px;top:522px;" width="10" height="9" viewBox="0 0 10 9"><rect x="0.500" y="0.500" width="9" height="8" fill="#e4e4ea" stroke="#8a8a90"/><path d="M3.500 3H6.500M3.500 4.500H6.500M3.500 6H6.500" stroke="#5a5a60" stroke-width="0.800"/></svg>
<div class="a t" style="left:640px;top:518.84px;height:16px;line-height:16px;letter-spacing:0.083px;">faHidden</div>
<svg style="left:621.7px;top:541px;" width="10" height="9" viewBox="0 0 10 9"><rect x="0.500" y="0.500" width="9" height="8" fill="#e4e4ea" stroke="#8a8a90"/><path d="M3.500 3H6.500M3.500 4.500H6.500M3.500 6H6.500" stroke="#5a5a60" stroke-width="0.800"/></svg>
<div class="a t" style="left:640px;top:537.82px;height:16px;line-height:16px;color:#fff;letter-spacing:-0.609px;">False</div>
<svg style="left:621.7px;top:560px;" width="10" height="9" viewBox="0 0 10 9"><rect x="0.500" y="0.500" width="9" height="8" fill="#e4e4ea" stroke="#8a8a90"/><path d="M3.500 3H6.500M3.500 4.500H6.500M3.500 6H6.500" stroke="#5a5a60" stroke-width="0.800"/></svg>
<div class="a t" style="left:640px;top:556.8px;height:16px;line-height:16px;letter-spacing:0.14px;">faNormal</div>
<svg style="left:621.7px;top:579px;" width="10" height="9" viewBox="0 0 10 9"><rect x="0.500" y="0.500" width="9" height="8" fill="#e4e4ea" stroke="#8a8a90"/><path d="M3.500 3H6.500M3.500 4.500H6.500M3.500 6H6.500" stroke="#5a5a60" stroke-width="0.800"/></svg>
<div class="a t" style="left:640px;top:575.78px;height:16px;line-height:16px;letter-spacing:0.17px;">faOffline</div>
<svg style="left:621.7px;top:598px;" width="10" height="9" viewBox="0 0 10 9"><rect x="0.500" y="0.500" width="9" height="8" fill="#e4e4ea" stroke="#8a8a90"/><path d="M3.500 3H6.500M3.500 4.500H6.500M3.500 6H6.500" stroke="#5a5a60" stroke-width="0.800"/></svg>
<div class="a t" style="left:640px;top:594.76px;height:16px;line-height:16px;letter-spacing:-0.237px;">faReadOnly</div>
<svg style="left:621.7px;top:617px;" width="10" height="9" viewBox="0 0 10 9"><rect x="0.500" y="0.500" width="9" height="8" fill="#e4e4ea" stroke="#8a8a90"/><path d="M3.500 3H6.500M3.500 4.500H6.500M3.500 6H6.500" stroke="#5a5a60" stroke-width="0.800"/></svg>
<div class="a t" style="left:640px;top:613.74px;height:16px;line-height:16px;letter-spacing:-0.266px;">faReparsePoint</div>
<svg style="left:621.7px;top:636px;" width="10" height="9" viewBox="0 0 10 9"><rect x="0.500" y="0.500" width="9" height="8" fill="#e4e4ea" stroke="#8a8a90"/><path d="M3.500 3H6.500M3.500 4.500H6.500M3.500 6H6.500" stroke="#5a5a60" stroke-width="0.800"/></svg>
<div class="a t" style="left:640px;top:632.72px;height:16px;line-height:16px;letter-spacing:-0.431px;">faSparseFile</div>
<div class="a" style="left:970px;top:458.5px;width:16.5px;height:192px;background:#f6f6f6;"></div>
<div class="a" style="left:970.5px;top:550.4px;width:14.5px;height:16.3px;background:#c9c9c9;"></div>
<svg style="left:977.5px;top:469px;" width="1" height="1" viewBox="0 0 1 1"><path d="M-3.500 2L0 -1.500L3.500 2" stroke="#4a4a4a" stroke-width="1.8" fill="none"/></svg>
<svg style="left:977.5px;top:641.6px;" width="1" height="1" viewBox="0 0 1 1"><path d="M-3.500 -2L0 1.500L3.500 -2" stroke="#4a4a4a" stroke-width="1.8" fill="none"/></svg>
</body></html>
